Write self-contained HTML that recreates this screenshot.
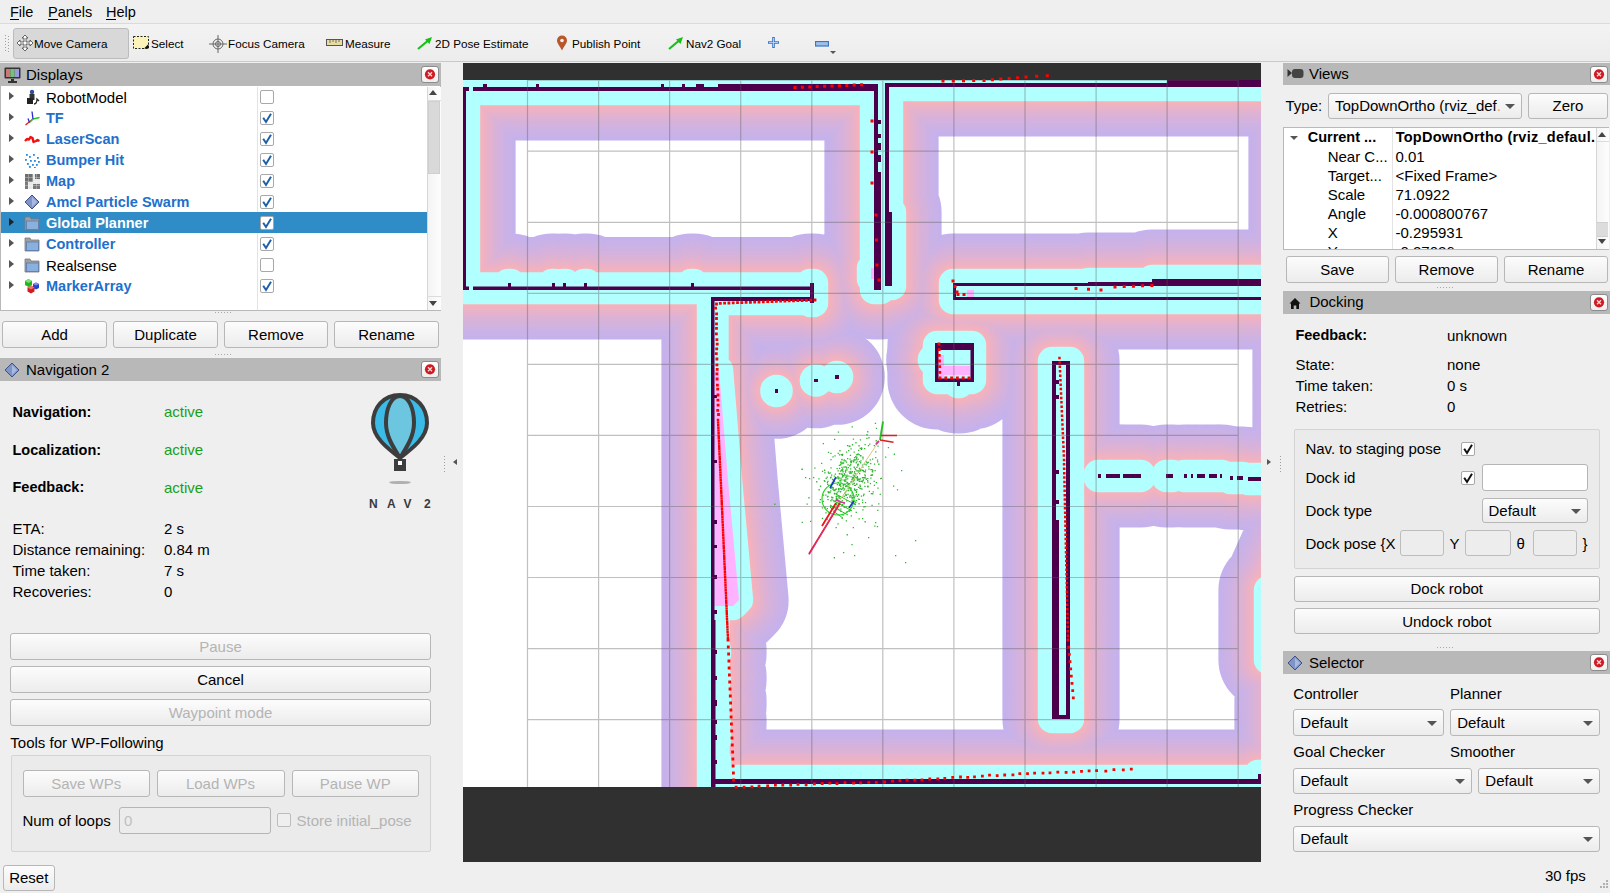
<!DOCTYPE html>
<html><head><meta charset="utf-8"><style>
html,body{margin:0;padding:0;width:1610px;height:893px;overflow:hidden;background:#efefef;}
body{position:relative;font-family:"Liberation Sans",sans-serif;}
div{position:absolute;white-space:nowrap;}
</style></head><body>
<div style="left:0px;top:0px;width:1610px;height:23px;background:#efefef;"></div>
<div style="left:0px;top:23px;width:1610px;height:1px;background:#dadada;"></div>
<div style="left:10px;top:4.73px;font-size:14.5px;line-height:14.5px;font-weight:400;color:#000;">File</div>
<div style="left:10px;top:19px;width:9px;height:1px;background:#000;"></div>
<div style="left:48px;top:4.73px;font-size:14.5px;line-height:14.5px;font-weight:400;color:#000;">Panels</div>
<div style="left:48px;top:19px;width:10px;height:1px;background:#000;"></div>
<div style="left:106px;top:4.73px;font-size:14.5px;line-height:14.5px;font-weight:400;color:#000;">Help</div>
<div style="left:106px;top:19px;width:10px;height:1px;background:#000;"></div>
<div style="left:0px;top:24px;width:1610px;height:38px;background:linear-gradient(#f3f3f3,#ececec);"></div>
<div style="left:0px;top:61px;width:1610px;height:1px;background:#c9c9c9;"></div>
<div style="left:5px;top:35px;width:1px;height:1px;background:#a0a0a0;"></div>
<div style="left:5px;top:38px;width:1px;height:1px;background:#a0a0a0;"></div>
<div style="left:5px;top:41px;width:1px;height:1px;background:#a0a0a0;"></div>
<div style="left:5px;top:44px;width:1px;height:1px;background:#a0a0a0;"></div>
<div style="left:5px;top:47px;width:1px;height:1px;background:#a0a0a0;"></div>
<div style="left:5px;top:50px;width:1px;height:1px;background:#a0a0a0;"></div>
<div style="left:8px;top:36px;width:1px;height:1px;background:#a0a0a0;"></div>
<div style="left:8px;top:39px;width:1px;height:1px;background:#a0a0a0;"></div>
<div style="left:8px;top:42px;width:1px;height:1px;background:#a0a0a0;"></div>
<div style="left:8px;top:45px;width:1px;height:1px;background:#a0a0a0;"></div>
<div style="left:8px;top:48px;width:1px;height:1px;background:#a0a0a0;"></div>
<div style="left:8px;top:51px;width:1px;height:1px;background:#a0a0a0;"></div>
<div style="left:13px;top:28px;width:116px;height:31px;box-sizing:border-box;border:1px solid #bcbcbc;border-radius:3px;background:#d8d8d8;"></div>
<svg style="position:absolute;left:16px;top:34px;" width="18" height="18" viewBox="0 0 18 18"><g fill="#fff" stroke="#444" stroke-width="0.8"><path d="M9 1 L12 4 L10 4 L10 8 L14 8 L14 6 L17 9 L14 12 L14 10 L10 10 L10 14 L12 14 L9 17 L6 14 L8 14 L8 10 L4 10 L4 12 L1 9 L4 6 L4 8 L8 8 L8 4 L6 4 Z"/></g></svg>
<div style="left:34px;top:37.60px;font-size:11.7px;line-height:11.7px;font-weight:400;color:#000;">Move Camera</div>
<svg style="position:absolute;left:133px;top:36px;" width="16" height="13" viewBox="0 0 16 13"><rect x="0.5" y="0.5" width="15" height="12" fill="#fbf3b8" stroke="#222" stroke-dasharray="2 1.5"/><path d="M11 12.5 L15.5 12.5 L15.5 8 Z" fill="#111"/></svg>
<div style="left:151px;top:37.60px;font-size:11.7px;line-height:11.7px;font-weight:400;color:#000;">Select</div>
<svg style="position:absolute;left:209px;top:35px;" width="18" height="18" viewBox="0 0 18 18"><g fill="none" stroke="#666" stroke-width="1"><circle cx="9" cy="9" r="5"/><circle cx="9" cy="9" r="2.5"/><path d="M9 0 V18 M0 9 H18"/></g></svg>
<div style="left:228px;top:37.60px;font-size:11.7px;line-height:11.7px;font-weight:400;color:#000;">Focus Camera</div>
<svg style="position:absolute;left:326px;top:39px;" width="17" height="8" viewBox="0 0 17 8"><rect x="0.5" y="0.5" width="16" height="6" fill="#e8dca0" stroke="#555"/><path d="M4 1 V4 M7 1 V3 M10 1 V4 M13 1 V3" stroke="#555" stroke-width="0.8"/></svg>
<div style="left:345px;top:37.60px;font-size:11.7px;line-height:11.7px;font-weight:400;color:#000;">Measure</div>
<svg style="position:absolute;left:417px;top:36px;" width="16" height="14" viewBox="0 0 16 14"><path d="M1 13 L13 3" stroke="#16c016" stroke-width="2.2"/><path d="M15 1 L8 3.5 L12.5 8 Z" fill="#16c016"/></svg>
<div style="left:435px;top:37.60px;font-size:11.7px;line-height:11.7px;font-weight:400;color:#000;">2D Pose Estimate</div>
<svg style="position:absolute;left:556px;top:35px;" width="12" height="16" viewBox="0 0 12 16"><path d="M6 15.5 C4 11 1 8.5 1 5.5 A5 5 0 0 1 11 5.5 C11 8.5 8 11 6 15.5 Z" fill="#b8572a"/><circle cx="6" cy="5.5" r="1.8" fill="#f0f0f0"/></svg>
<div style="left:572px;top:37.60px;font-size:11.7px;line-height:11.7px;font-weight:400;color:#000;">Publish Point</div>
<svg style="position:absolute;left:668px;top:36px;" width="16" height="14" viewBox="0 0 16 14"><path d="M1 13 L13 3" stroke="#16c016" stroke-width="2.2"/><path d="M15 1 L8 3.5 L12.5 8 Z" fill="#16c016"/></svg>
<div style="left:686px;top:37.60px;font-size:11.7px;line-height:11.7px;font-weight:400;color:#000;">Nav2 Goal</div>
<svg style="position:absolute;left:767px;top:36px;" width="13" height="13" viewBox="0 0 13 13"><path d="M6.5 1 V12 M1 6.5 H12" stroke="#3a76c4" stroke-width="2.6"/><path d="M6.5 2 V11 M2 6.5 H11" stroke="#cfe0f5" stroke-width="0.8"/></svg>
<svg style="position:absolute;left:815px;top:41px;" width="14" height="6" viewBox="0 0 14 6"><rect x="0.5" y="0.5" width="13" height="4.5" fill="#9cc0ea" stroke="#3a76c4" stroke-width="1.2"/></svg>
<div style="left:830px;top:51px;width:0;height:0;border-left:3px solid transparent;border-right:3px solid transparent;border-top:3px solid #555;"></div>
<div style="left:0px;top:62px;width:1610px;height:831px;background:#efefef;"></div>
<div style="left:0px;top:63px;width:441px;height:23px;background:#b8b8b8;"></div>
<svg style="position:absolute;left:4px;top:67px;" width="17" height="17" viewBox="0 0 17 17"><rect x="0.5" y="0.5" width="16" height="11" rx="1" fill="#333"/><rect x="2" y="2" width="4.3" height="8" fill="#c87878"/><rect x="6.3" y="2" width="4.4" height="8" fill="#78c078"/><rect x="10.7" y="2" width="4.3" height="8" fill="#9a9ae0"/><rect x="7" y="12" width="3" height="2" fill="#333"/><rect x="4" y="14" width="9" height="2" fill="#333"/></svg>
<div style="left:26px;top:66.80px;font-size:15px;line-height:15px;font-weight:400;color:#000;">Displays</div>
<div style="left:421px;top:66px;width:18px;height:17px;box-sizing:border-box;border:1px solid #8c8c8c;border-radius:3px;background:linear-gradient(#ffffff,#eeeeee);"></div>
<svg style="position:absolute;left:421px;top:66px" width="18" height="17"><circle cx="9" cy="8.3" r="5.1" fill="#d01a22"/><path d="M7 6.3 L11 10.3 M11 6.3 L7 10.3" stroke="#f4dede" stroke-width="1.3"/></svg>
<div style="left:0px;top:86px;width:441px;height:225px;box-sizing:border-box;border:1px solid #b9b9b9;border-top:none;background:#fff;"></div>
<div style="left:257px;top:87px;width:1px;height:223px;background:#e3e3e3;"></div>
<div style="left:427px;top:87px;width:13px;height:223px;background:linear-gradient(90deg,#f4f4f4,#fdfdfd);border-left:1px solid #d6d6d6;"></div>
<div style="left:428px;top:101px;width:12px;height:73px;box-sizing:border-box;background:#d9d9d9;border:1px solid #cfcfcf;"></div>
<div style="left:427px;top:100px;width:14px;height:1px;background:#dcdcdc;"></div>
<div style="left:427px;top:296px;width:14px;height:1px;background:#dcdcdc;"></div>
<div style="left:429px;top:90px;width:0;height:0;border-left:4.5px solid transparent;border-right:4.5px solid transparent;border-bottom:5px solid #444;"></div>
<div style="left:429px;top:301px;width:0;height:0;border-left:4.5px solid transparent;border-right:4.5px solid transparent;border-top:5px solid #444;"></div>
<div style="left:9px;top:92px;width:0;height:0;border-top:4.5px solid transparent;border-bottom:4.5px solid transparent;border-left:5px solid #555;"></div>
<svg style="position:absolute;left:24px;top:89px;" width="16" height="16" viewBox="0 0 16 16"><circle cx="8" cy="3" r="2.2" fill="#2a4fa0"/><rect x="5.5" y="5" width="5" height="6" fill="#333"/><rect x="3" y="9" width="6" height="6" fill="#222"/><path d="M10 15 Q13 15 13 10 L15 12" stroke="#222" fill="none" stroke-width="1.3"/></svg>
<div style="left:46px;top:89.90px;font-size:15px;line-height:15px;font-weight:400;color:#000;">RobotModel</div>
<div style="left:260px;top:90px;width:14px;height:14px;box-sizing:border-box;border:1px solid #a8a8a8;border-radius:2px;background:#fff;"></div>
<div style="left:9px;top:113px;width:0;height:0;border-top:4.5px solid transparent;border-bottom:4.5px solid transparent;border-left:5px solid #555;"></div>
<svg style="position:absolute;left:24px;top:110px;" width="16" height="16" viewBox="0 0 16 16"><path d="M9 9 L1.5 15" stroke="#e81c1c" stroke-width="1.4"/><path d="M9 9 L15.5 7.5 M9 9 L5.5 12.5" stroke="#22c822" stroke-width="1.4"/><path d="M9 9 L8 1.5 M5.5 12.5 L4 8.5" stroke="#2a2ad8" stroke-width="1.3"/></svg>
<div style="left:46px;top:111.33px;font-size:14.5px;line-height:14.5px;font-weight:700;color:#2170cc;">TF</div>
<div style="left:260px;top:111px;width:14px;height:14px;box-sizing:border-box;border:1px solid #a8a8a8;border-radius:2px;background:#fff;"></div>
<svg style="position:absolute;left:260px;top:111px" width="14" height="14" viewBox="0 0 14 14"><path d="M3.2 6.8 L6 11 L11 2.8" fill="none" stroke="#1f5fa8" stroke-width="2"/></svg>
<div style="left:9px;top:134px;width:0;height:0;border-top:4.5px solid transparent;border-bottom:4.5px solid transparent;border-left:5px solid #555;"></div>
<svg style="position:absolute;left:24px;top:131px;" width="16" height="16" viewBox="0 0 16 16"><path d="M1 10 L3 8 L5 8.5 L6.5 6 L8.5 7 L9.5 11 L12 10 L13.5 9 L15.5 10" stroke="#f01010" stroke-width="2.4" fill="none" stroke-linejoin="round"/></svg>
<div style="left:46px;top:132.33px;font-size:14.5px;line-height:14.5px;font-weight:700;color:#2170cc;">LaserScan</div>
<div style="left:260px;top:132px;width:14px;height:14px;box-sizing:border-box;border:1px solid #a8a8a8;border-radius:2px;background:#fff;"></div>
<svg style="position:absolute;left:260px;top:132px" width="14" height="14" viewBox="0 0 14 14"><path d="M3.2 6.8 L6 11 L11 2.8" fill="none" stroke="#1f5fa8" stroke-width="2"/></svg>
<div style="left:9px;top:155px;width:0;height:0;border-top:4.5px solid transparent;border-bottom:4.5px solid transparent;border-left:5px solid #555;"></div>
<svg style="position:absolute;left:24px;top:152px;" width="16" height="16" viewBox="0 0 16 16"><rect x="2" y="2" width="1.8" height="1.8" fill="#2a8ae0"/><rect x="5" y="4" width="1.8" height="1.8" fill="#2a8ae0"/><rect x="9" y="2" width="1.8" height="1.8" fill="#2a8ae0"/><rect x="13" y="5" width="1.8" height="1.8" fill="#2a8ae0"/><rect x="1" y="7" width="1.8" height="1.8" fill="#2a8ae0"/><rect x="6" y="8" width="1.8" height="1.8" fill="#2a8ae0"/><rect x="10" y="8" width="1.8" height="1.8" fill="#2a8ae0"/><rect x="14" y="9" width="1.8" height="1.8" fill="#2a8ae0"/><rect x="3" y="11" width="1.8" height="1.8" fill="#2a8ae0"/><rect x="8" y="12" width="1.8" height="1.8" fill="#2a8ae0"/><rect x="12" y="12" width="1.8" height="1.8" fill="#2a8ae0"/><rect x="5" y="14" width="1.8" height="1.8" fill="#2a8ae0"/><rect x="10" y="15" width="1.8" height="1.8" fill="#2a8ae0"/></svg>
<div style="left:46px;top:153.33px;font-size:14.5px;line-height:14.5px;font-weight:700;color:#2170cc;">Bumper Hit</div>
<div style="left:260px;top:153px;width:14px;height:14px;box-sizing:border-box;border:1px solid #a8a8a8;border-radius:2px;background:#fff;"></div>
<svg style="position:absolute;left:260px;top:153px" width="14" height="14" viewBox="0 0 14 14"><path d="M3.2 6.8 L6 11 L11 2.8" fill="none" stroke="#1f5fa8" stroke-width="2"/></svg>
<div style="left:9px;top:176px;width:0;height:0;border-top:4.5px solid transparent;border-bottom:4.5px solid transparent;border-left:5px solid #555;"></div>
<svg style="position:absolute;left:24px;top:173px;" width="16" height="16" viewBox="0 0 16 16"><rect x="1" y="1" width="15" height="15" fill="#e8e8e8"/><rect x="1" y="1" width="8" height="8" fill="#6e6e6e"/><rect x="11" y="1" width="5" height="5" fill="#6e6e6e"/><rect x="1" y="9" width="3" height="7" fill="#7a7a7a"/><rect x="9" y="11" width="7" height="5" fill="#777"/><path d="M1 4.5H16M1 8.5H16M1 12.5H16M4.5 1V16M8.5 1V16M12.5 1V16" stroke="#fff" stroke-width="0.5" opacity="0.6"/></svg>
<div style="left:46px;top:174.33px;font-size:14.5px;line-height:14.5px;font-weight:700;color:#2170cc;">Map</div>
<div style="left:260px;top:174px;width:14px;height:14px;box-sizing:border-box;border:1px solid #a8a8a8;border-radius:2px;background:#fff;"></div>
<svg style="position:absolute;left:260px;top:174px" width="14" height="14" viewBox="0 0 14 14"><path d="M3.2 6.8 L6 11 L11 2.8" fill="none" stroke="#1f5fa8" stroke-width="2"/></svg>
<div style="left:9px;top:197px;width:0;height:0;border-top:4.5px solid transparent;border-bottom:4.5px solid transparent;border-left:5px solid #555;"></div>
<svg style="position:absolute;left:24px;top:194px;" width="16" height="16" viewBox="0 0 16 16"><path d="M8 1 L15 8 L8 15 L1 8 Z" fill="#7f95c8" stroke="#3f4f88" stroke-width="1"/><path d="M8 3 L13 8 L8 13 Z" fill="#a8b8e0"/></svg>
<div style="left:46px;top:195.33px;font-size:14.5px;line-height:14.5px;font-weight:700;color:#2170cc;">Amcl Particle Swarm</div>
<div style="left:260px;top:195px;width:14px;height:14px;box-sizing:border-box;border:1px solid #a8a8a8;border-radius:2px;background:#fff;"></div>
<svg style="position:absolute;left:260px;top:195px" width="14" height="14" viewBox="0 0 14 14"><path d="M3.2 6.8 L6 11 L11 2.8" fill="none" stroke="#1f5fa8" stroke-width="2"/></svg>
<div style="left:1px;top:212px;width:426px;height:21px;background:#308cc6;"></div>
<div style="left:9px;top:218px;width:0;height:0;border-top:4.5px solid transparent;border-bottom:4.5px solid transparent;border-left:5px solid #222;"></div>
<svg style="position:absolute;left:24px;top:215px;" width="16" height="16" viewBox="0 0 16 16"><path d="M1 2 L6 2 L7 4 L15 4 L15 15 L1 15 Z" fill="#a0a0a0" stroke="#7a7a7a" stroke-width="0.8"/><rect x="2.5" y="6" width="12" height="8.5" fill="#8ab0e0" stroke="#5a7aaa" stroke-width="0.8"/></svg>
<div style="left:46px;top:216.33px;font-size:14.5px;line-height:14.5px;font-weight:700;color:#fff;">Global Planner</div>
<div style="left:260px;top:216px;width:14px;height:14px;box-sizing:border-box;border:1px solid #a8a8a8;border-radius:2px;background:#fff;"></div>
<svg style="position:absolute;left:260px;top:216px" width="14" height="14" viewBox="0 0 14 14"><path d="M3.2 6.8 L6 11 L11 2.8" fill="none" stroke="#1f5fa8" stroke-width="2"/></svg>
<div style="left:9px;top:239px;width:0;height:0;border-top:4.5px solid transparent;border-bottom:4.5px solid transparent;border-left:5px solid #555;"></div>
<svg style="position:absolute;left:24px;top:236px;" width="16" height="16" viewBox="0 0 16 16"><path d="M1 2 L6 2 L7 4 L15 4 L15 15 L1 15 Z" fill="#a0a0a0" stroke="#7a7a7a" stroke-width="0.8"/><rect x="2.5" y="6" width="12" height="8.5" fill="#8ab0e0" stroke="#5a7aaa" stroke-width="0.8"/></svg>
<div style="left:46px;top:237.33px;font-size:14.5px;line-height:14.5px;font-weight:700;color:#2170cc;">Controller</div>
<div style="left:260px;top:237px;width:14px;height:14px;box-sizing:border-box;border:1px solid #a8a8a8;border-radius:2px;background:#fff;"></div>
<svg style="position:absolute;left:260px;top:237px" width="14" height="14" viewBox="0 0 14 14"><path d="M3.2 6.8 L6 11 L11 2.8" fill="none" stroke="#1f5fa8" stroke-width="2"/></svg>
<div style="left:9px;top:260px;width:0;height:0;border-top:4.5px solid transparent;border-bottom:4.5px solid transparent;border-left:5px solid #555;"></div>
<svg style="position:absolute;left:24px;top:257px;" width="16" height="16" viewBox="0 0 16 16"><path d="M1 2 L6 2 L7 4 L15 4 L15 15 L1 15 Z" fill="#a0a0a0" stroke="#7a7a7a" stroke-width="0.8"/><rect x="2.5" y="6" width="12" height="8.5" fill="#8ab0e0" stroke="#5a7aaa" stroke-width="0.8"/></svg>
<div style="left:46px;top:257.90px;font-size:15px;line-height:15px;font-weight:400;color:#000;">Realsense</div>
<div style="left:260px;top:258px;width:14px;height:14px;box-sizing:border-box;border:1px solid #a8a8a8;border-radius:2px;background:#fff;"></div>
<div style="left:9px;top:281px;width:0;height:0;border-top:4.5px solid transparent;border-bottom:4.5px solid transparent;border-left:5px solid #555;"></div>
<svg style="position:absolute;left:24px;top:278px;" width="16" height="16" viewBox="0 0 16 16"><path d="M1 3 L4.5 1 L8 3 L8 7 L4.5 9 L1 7 Z" fill="#1fb81f"/><path d="M1 3 L4.5 5 L8 3 L4.5 1 Z" fill="#7de07d"/><path d="M9 6 L12 4.5 L15 6 L15 10 L12 11.5 L9 10 Z" fill="#2444d0"/><path d="M9 6 L12 7.5 L15 6 L12 4.5 Z" fill="#8090f0"/><path d="M3.5 9.5 L7 7.5 L10.5 9.5 L10.5 13.5 L7 15.5 L3.5 13.5 Z" fill="#d01c1c"/><path d="M3.5 9.5 L7 11.5 L10.5 9.5 L7 7.5 Z" fill="#f07070"/></svg>
<div style="left:46px;top:279.33px;font-size:14.5px;line-height:14.5px;font-weight:700;color:#2170cc;">MarkerArray</div>
<div style="left:260px;top:279px;width:14px;height:14px;box-sizing:border-box;border:1px solid #a8a8a8;border-radius:2px;background:#fff;"></div>
<svg style="position:absolute;left:260px;top:279px" width="14" height="14" viewBox="0 0 14 14"><path d="M3.2 6.8 L6 11 L11 2.8" fill="none" stroke="#1f5fa8" stroke-width="2"/></svg>
<div style="left:215px;top:312px;width:1px;height:1px;background:#a8a8a8;"></div>
<div style="left:218px;top:312px;width:1px;height:1px;background:#a8a8a8;"></div>
<div style="left:221px;top:312px;width:1px;height:1px;background:#a8a8a8;"></div>
<div style="left:224px;top:312px;width:1px;height:1px;background:#a8a8a8;"></div>
<div style="left:227px;top:312px;width:1px;height:1px;background:#a8a8a8;"></div>
<div style="left:230px;top:312px;width:1px;height:1px;background:#a8a8a8;"></div>
<div style="left:2px;top:321px;width:105px;height:27px;box-sizing:border-box;border:1px solid #b7b7b7;border-radius:3px;background:linear-gradient(#fcfcfc,#ececec);"></div>
<div style="left:2px;top:326.96px;font-size:15px;line-height:15px;font-weight:400;color:#000;width:105px;text-align:center;">Add</div>
<div style="left:113px;top:321px;width:105px;height:27px;box-sizing:border-box;border:1px solid #b7b7b7;border-radius:3px;background:linear-gradient(#fcfcfc,#ececec);"></div>
<div style="left:113px;top:326.96px;font-size:15px;line-height:15px;font-weight:400;color:#000;width:105px;text-align:center;">Duplicate</div>
<div style="left:224px;top:321px;width:104px;height:27px;box-sizing:border-box;border:1px solid #b7b7b7;border-radius:3px;background:linear-gradient(#fcfcfc,#ececec);"></div>
<div style="left:224px;top:326.96px;font-size:15px;line-height:15px;font-weight:400;color:#000;width:104px;text-align:center;">Remove</div>
<div style="left:334px;top:321px;width:105px;height:27px;box-sizing:border-box;border:1px solid #b7b7b7;border-radius:3px;background:linear-gradient(#fcfcfc,#ececec);"></div>
<div style="left:334px;top:326.96px;font-size:15px;line-height:15px;font-weight:400;color:#000;width:105px;text-align:center;">Rename</div>
<div style="left:215px;top:354px;width:1px;height:1px;background:#a8a8a8;"></div>
<div style="left:218px;top:354px;width:1px;height:1px;background:#a8a8a8;"></div>
<div style="left:221px;top:354px;width:1px;height:1px;background:#a8a8a8;"></div>
<div style="left:224px;top:354px;width:1px;height:1px;background:#a8a8a8;"></div>
<div style="left:227px;top:354px;width:1px;height:1px;background:#a8a8a8;"></div>
<div style="left:230px;top:354px;width:1px;height:1px;background:#a8a8a8;"></div>
<div style="left:0px;top:358px;width:441px;height:23px;background:#b8b8b8;"></div>
<svg style="position:absolute;left:4px;top:362px;" width="16" height="16" viewBox="0 0 16 16"><path d="M8 1 L15 8 L8 15 L1 8 Z" fill="#7f95c8" stroke="#3f4f88" stroke-width="1"/><path d="M8 3 L13 8 L8 13 Z" fill="#a8b8e0"/></svg>
<div style="left:26px;top:361.80px;font-size:15px;line-height:15px;font-weight:400;color:#000;">Navigation 2</div>
<div style="left:421px;top:361px;width:18px;height:17px;box-sizing:border-box;border:1px solid #8c8c8c;border-radius:3px;background:linear-gradient(#ffffff,#eeeeee);"></div>
<svg style="position:absolute;left:421px;top:361px" width="18" height="17"><circle cx="9" cy="8.3" r="5.1" fill="#d01a22"/><path d="M7 6.3 L11 10.3 M11 6.3 L7 10.3" stroke="#f4dede" stroke-width="1.3"/></svg>
<div style="left:12.5px;top:404.53px;font-size:14.5px;line-height:14.5px;font-weight:700;color:#000;">Navigation:</div>
<div style="left:164px;top:404.10px;font-size:15px;line-height:15px;font-weight:400;color:#19a019;">active</div>
<div style="left:12.5px;top:442.53px;font-size:14.5px;line-height:14.5px;font-weight:700;color:#000;">Localization:</div>
<div style="left:164px;top:442.10px;font-size:15px;line-height:15px;font-weight:400;color:#19a019;">active</div>
<div style="left:12.5px;top:480.23px;font-size:14.5px;line-height:14.5px;font-weight:700;color:#000;">Feedback:</div>
<div style="left:164px;top:479.80px;font-size:15px;line-height:15px;font-weight:400;color:#19a019;">active</div>
<div style="left:12.5px;top:521.10px;font-size:15px;line-height:15px;font-weight:400;color:#000;">ETA:</div>
<div style="left:164px;top:521.10px;font-size:15px;line-height:15px;font-weight:400;color:#000;">2 s</div>
<div style="left:12.5px;top:542.00px;font-size:15px;line-height:15px;font-weight:400;color:#000;">Distance remaining:</div>
<div style="left:164px;top:542.00px;font-size:15px;line-height:15px;font-weight:400;color:#000;">0.84 m</div>
<div style="left:12.5px;top:562.90px;font-size:15px;line-height:15px;font-weight:400;color:#000;">Time taken:</div>
<div style="left:164px;top:562.90px;font-size:15px;line-height:15px;font-weight:400;color:#000;">7 s</div>
<div style="left:12.5px;top:583.70px;font-size:15px;line-height:15px;font-weight:400;color:#000;">Recoveries:</div>
<div style="left:164px;top:583.70px;font-size:15px;line-height:15px;font-weight:400;color:#000;">0</div>
<svg style="position:absolute;left:370px;top:392px;" width="62" height="95" viewBox="0 0 62 95">
<path d="M30 3 C13 3 3 16 3 31 C3 45 17 56 30 66 C43 56 57 45 57 31 C57 16 47 3 30 3 Z" fill="#3bbbe8" stroke="#3d3d3d" stroke-width="4"/>
<path d="M30 4 C21 4 16 17 16 31 C16 45 24 56 30 66 C36 56 44 45 44 31 C44 17 39 4 30 4 Z" fill="#6cc6e0" stroke="#3d3d3d" stroke-width="4"/>
<path d="M24 67 H36 V79 H24 Z" fill="#3d3d3d"/><rect x="28" y="69" width="4" height="4" fill="#fff"/>
<ellipse cx="30" cy="90.5" rx="11" ry="1.6" fill="#b0b0b0"/>
</svg>
<div style="left:369px;top:497.64px;font-size:12px;line-height:12px;font-weight:700;color:#3a3a3a;">N</div>
<div style="left:387px;top:497.64px;font-size:12px;line-height:12px;font-weight:700;color:#3a3a3a;">A</div>
<div style="left:403.5px;top:497.64px;font-size:12px;line-height:12px;font-weight:700;color:#3a3a3a;">V</div>
<div style="left:424px;top:497.64px;font-size:12px;line-height:12px;font-weight:700;color:#3a3a3a;">2</div>
<div style="left:444px;top:456px;width:1px;height:1px;background:#a0a0a0;"></div>
<div style="left:444px;top:459px;width:1px;height:1px;background:#a0a0a0;"></div>
<div style="left:444px;top:462px;width:1px;height:1px;background:#a0a0a0;"></div>
<div style="left:444px;top:465px;width:1px;height:1px;background:#a0a0a0;"></div>
<div style="left:444px;top:468px;width:1px;height:1px;background:#a0a0a0;"></div>
<div style="left:444px;top:471px;width:1px;height:1px;background:#a0a0a0;"></div>
<div style="left:453px;top:459px;width:0;height:0;border-top:3.5px solid transparent;border-bottom:3.5px solid transparent;border-right:4px solid #555;"></div>
<div style="left:10px;top:633px;width:421px;height:27px;box-sizing:border-box;border:1px solid #b7b7b7;border-radius:3px;background:linear-gradient(#fcfcfc,#ececec);"></div>
<div style="left:10px;top:638.96px;font-size:15px;line-height:15px;font-weight:400;color:#b4b4b4;width:421px;text-align:center;">Pause</div>
<div style="left:10px;top:666px;width:421px;height:27px;box-sizing:border-box;border:1px solid #b7b7b7;border-radius:3px;background:linear-gradient(#fcfcfc,#ececec);"></div>
<div style="left:10px;top:671.96px;font-size:15px;line-height:15px;font-weight:400;color:#000;width:421px;text-align:center;">Cancel</div>
<div style="left:10px;top:699px;width:421px;height:27px;box-sizing:border-box;border:1px solid #b7b7b7;border-radius:3px;background:linear-gradient(#fcfcfc,#ececec);"></div>
<div style="left:10px;top:704.96px;font-size:15px;line-height:15px;font-weight:400;color:#b4b4b4;width:421px;text-align:center;">Waypoint mode</div>
<div style="left:10.3px;top:734.70px;font-size:15px;line-height:15px;font-weight:400;color:#000;">Tools for WP-Following</div>
<div style="left:11px;top:755px;width:420px;height:97px;box-sizing:border-box;border:1px solid #d4d4d4;border-radius:2px;background:#ebebeb;"></div>
<div style="left:22.5px;top:770px;width:127.5px;height:27px;box-sizing:border-box;border:1px solid #b7b7b7;border-radius:3px;background:linear-gradient(#fcfcfc,#ececec);"></div>
<div style="left:22.5px;top:775.96px;font-size:15px;line-height:15px;font-weight:400;color:#b4b4b4;width:127.5px;text-align:center;">Save WPs</div>
<div style="left:156.5px;top:770px;width:128.0px;height:27px;box-sizing:border-box;border:1px solid #b7b7b7;border-radius:3px;background:linear-gradient(#fcfcfc,#ececec);"></div>
<div style="left:156.5px;top:775.96px;font-size:15px;line-height:15px;font-weight:400;color:#b4b4b4;width:128.0px;text-align:center;">Load WPs</div>
<div style="left:291.5px;top:770px;width:127.5px;height:27px;box-sizing:border-box;border:1px solid #b7b7b7;border-radius:3px;background:linear-gradient(#fcfcfc,#ececec);"></div>
<div style="left:291.5px;top:775.96px;font-size:15px;line-height:15px;font-weight:400;color:#b4b4b4;width:127.5px;text-align:center;">Pause WP</div>
<div style="left:22.4px;top:812.60px;font-size:15px;line-height:15px;font-weight:400;color:#000;">Num of loops</div>
<div style="left:119px;top:807px;width:152px;height:27px;box-sizing:border-box;border:1px solid #b5b5b5;border-radius:3px;background:#ececec;"></div>
<div style="left:124px;top:812.60px;font-size:15px;line-height:15px;font-weight:400;color:#c0c0c0;">0</div>
<div style="left:277px;top:813px;width:14px;height:14px;box-sizing:border-box;border:1px solid #bdbdbd;border-radius:2px;background:#efefef;"></div>
<div style="left:296.5px;top:812.60px;font-size:15px;line-height:15px;font-weight:400;color:#b4b4b4;">Store initial_pose</div>
<div style="left:2.5px;top:865px;width:52.5px;height:26px;box-sizing:border-box;border:1px solid #b7b7b7;border-radius:3px;background:linear-gradient(#fcfcfc,#ececec);"></div>
<div style="left:2.5px;top:870.46px;font-size:15px;line-height:15px;font-weight:400;color:#000;width:52.5px;text-align:center;">Reset</div>
<div style="left:1283px;top:63px;width:327px;height:22px;background:#b8b8b8;"></div>
<svg style="position:absolute;left:1287px;top:67px;" width="17" height="14" viewBox="0 0 17 14"><path d="M0.5 2 L5 6 L0.5 10 Z" fill="#333"/><rect x="5" y="2" width="11.5" height="9" rx="3" fill="#444"/></svg>
<div style="left:1309px;top:66.30px;font-size:15px;line-height:15px;font-weight:400;color:#000;">Views</div>
<div style="left:1590px;top:66px;width:18px;height:17px;box-sizing:border-box;border:1px solid #8c8c8c;border-radius:3px;background:linear-gradient(#ffffff,#eeeeee);"></div>
<svg style="position:absolute;left:1590px;top:66px" width="18" height="17"><circle cx="9" cy="8.3" r="5.1" fill="#d01a22"/><path d="M7 6.3 L11 10.3 M11 6.3 L7 10.3" stroke="#f4dede" stroke-width="1.3"/></svg>
<div style="left:1285.5px;top:98.10px;font-size:15px;line-height:15px;font-weight:400;color:#000;">Type:</div>
<div style="left:1328px;top:92.5px;width:194px;height:26.5px;box-sizing:border-box;border:1px solid #b7b7b7;border-radius:3px;background:linear-gradient(#fcfcfc,#ececec);"></div>
<div style="left:1335px;top:98.10px;font-size:15px;line-height:15px;font-weight:400;color:#000;">TopDownOrtho (rviz_def<span style="color:#e0a060">.</span></div>
<div style="left:1505px;top:103.75px;width:0;height:0;border-left:5px solid transparent;border-right:5px solid transparent;border-top:5px solid #555;"></div>
<div style="left:1528px;top:92.5px;width:80px;height:26.5px;box-sizing:border-box;border:1px solid #b7b7b7;border-radius:3px;background:linear-gradient(#fcfcfc,#ececec);"></div>
<div style="left:1528px;top:98.10px;font-size:15px;line-height:15px;font-weight:400;color:#000;width:80px;text-align:center;">Zero</div>
<div style="left:1283px;top:127px;width:326px;height:123px;box-sizing:border-box;border:1px solid #b9b9b9;background:#fff;"></div>
<div style="left:1392px;top:128px;width:1px;height:121px;background:#e3e3e3;"></div>
<div style="left:1596px;top:128px;width:12px;height:121px;background:linear-gradient(90deg,#f4f4f4,#fdfdfd);border-left:1px solid #d6d6d6;"></div>
<div style="left:1597px;top:222px;width:11px;height:13px;background:#dcdcdc;border-top:1px solid #cfcfcf;border-bottom:1px solid #cfcfcf;"></div>
<div style="left:1596px;top:141px;width:13px;height:1px;background:#dcdcdc;"></div>
<div style="left:1598px;top:132px;width:0;height:0;border-left:4px solid transparent;border-right:4px solid transparent;border-bottom:5px solid #444;"></div>
<div style="left:1598px;top:239px;width:0;height:0;border-left:4px solid transparent;border-right:4px solid transparent;border-top:5px solid #444;"></div>
<div style="left:1290px;top:136px;width:0;height:0;border-left:4px solid transparent;border-right:4px solid transparent;border-top:4.5px solid #555;"></div>
<div style="left:1284px;top:128px;width:312px;height:121px;overflow:hidden;">
<div style="left:23.700000000000045px;top:2.03px;font-size:14.5px;line-height:14.5px;font-weight:700;white-space:nowrap;">Current ...</div>
<div style="left:111.7px;top:1.6px;font-size:14.5px;line-height:14.5px;font-weight:700;letter-spacing:0.25px;">TopDownOrtho (rviz_defaul.</div>
<div style="left:43.700000000000045px;top:20.80px;font-size:15px;line-height:15px;font-weight:400;white-space:nowrap;">Near C...</div>
<div style="left:111.5px;top:20.80px;font-size:15px;line-height:15px;font-weight:400;white-space:nowrap;">0.01</div>
<div style="left:43.700000000000045px;top:39.80px;font-size:15px;line-height:15px;font-weight:400;white-space:nowrap;">Target...</div>
<div style="left:111.5px;top:39.80px;font-size:15px;line-height:15px;font-weight:400;white-space:nowrap;">&lt;Fixed Frame&gt;</div>
<div style="left:43.700000000000045px;top:58.80px;font-size:15px;line-height:15px;font-weight:400;white-space:nowrap;">Scale</div>
<div style="left:111.5px;top:58.80px;font-size:15px;line-height:15px;font-weight:400;white-space:nowrap;">71.0922</div>
<div style="left:43.700000000000045px;top:77.80px;font-size:15px;line-height:15px;font-weight:400;white-space:nowrap;">Angle</div>
<div style="left:111.5px;top:77.80px;font-size:15px;line-height:15px;font-weight:400;white-space:nowrap;">-0.000800767</div>
<div style="left:43.700000000000045px;top:96.80px;font-size:15px;line-height:15px;font-weight:400;white-space:nowrap;">X</div>
<div style="left:111.5px;top:96.80px;font-size:15px;line-height:15px;font-weight:400;white-space:nowrap;">-0.295931</div>
<div style="left:43.700000000000045px;top:115.80px;font-size:15px;line-height:15px;font-weight:400;white-space:nowrap;">Y</div>
<div style="left:111.5px;top:115.80px;font-size:15px;line-height:15px;font-weight:400;white-space:nowrap;">-0.27026</div>
</div>
<div style="left:1285.5px;top:256px;width:103.5px;height:27px;box-sizing:border-box;border:1px solid #b7b7b7;border-radius:3px;background:linear-gradient(#fcfcfc,#ececec);"></div>
<div style="left:1285.5px;top:261.96px;font-size:15px;line-height:15px;font-weight:400;color:#000;width:103.5px;text-align:center;">Save</div>
<div style="left:1395px;top:256px;width:103px;height:27px;box-sizing:border-box;border:1px solid #b7b7b7;border-radius:3px;background:linear-gradient(#fcfcfc,#ececec);"></div>
<div style="left:1395px;top:261.96px;font-size:15px;line-height:15px;font-weight:400;color:#000;width:103px;text-align:center;">Remove</div>
<div style="left:1504px;top:256px;width:104px;height:27px;box-sizing:border-box;border:1px solid #b7b7b7;border-radius:3px;background:linear-gradient(#fcfcfc,#ececec);"></div>
<div style="left:1504px;top:261.96px;font-size:15px;line-height:15px;font-weight:400;color:#000;width:104px;text-align:center;">Rename</div>
<div style="left:1437px;top:287px;width:1px;height:1px;background:#a8a8a8;"></div>
<div style="left:1440px;top:287px;width:1px;height:1px;background:#a8a8a8;"></div>
<div style="left:1443px;top:287px;width:1px;height:1px;background:#a8a8a8;"></div>
<div style="left:1446px;top:287px;width:1px;height:1px;background:#a8a8a8;"></div>
<div style="left:1449px;top:287px;width:1px;height:1px;background:#a8a8a8;"></div>
<div style="left:1452px;top:287px;width:1px;height:1px;background:#a8a8a8;"></div>
<div style="left:1283px;top:291px;width:327px;height:23px;background:#b8b8b8;"></div>
<svg style="position:absolute;left:1289px;top:297px;" width="12" height="13" viewBox="0 0 12 13"><path d="M6 1 L11.5 6.5 L10 6.5 L10 12 L7.3 12 L7.3 8.5 L4.7 8.5 L4.7 12 L2 12 L2 6.5 L0.5 6.5 Z" fill="#111"/></svg>
<div style="left:1309.4px;top:294.30px;font-size:15px;line-height:15px;font-weight:400;color:#000;">Docking</div>
<div style="left:1590px;top:294px;width:18px;height:17px;box-sizing:border-box;border:1px solid #8c8c8c;border-radius:3px;background:linear-gradient(#ffffff,#eeeeee);"></div>
<svg style="position:absolute;left:1590px;top:294px" width="18" height="17"><circle cx="9" cy="8.3" r="5.1" fill="#d01a22"/><path d="M7 6.3 L11 10.3 M11 6.3 L7 10.3" stroke="#f4dede" stroke-width="1.3"/></svg>
<div style="left:1295.4px;top:328.33px;font-size:14.5px;line-height:14.5px;font-weight:700;color:#000;">Feedback:</div>
<div style="left:1447px;top:327.90px;font-size:15px;line-height:15px;font-weight:400;color:#000;">unknown</div>
<div style="left:1295.4px;top:357.00px;font-size:15px;line-height:15px;font-weight:400;color:#000;">State:</div>
<div style="left:1447px;top:357.00px;font-size:15px;line-height:15px;font-weight:400;color:#000;">none</div>
<div style="left:1295.4px;top:377.70px;font-size:15px;line-height:15px;font-weight:400;color:#000;">Time taken:</div>
<div style="left:1447px;top:377.70px;font-size:15px;line-height:15px;font-weight:400;color:#000;">0 s</div>
<div style="left:1295.4px;top:398.50px;font-size:15px;line-height:15px;font-weight:400;color:#000;">Retries:</div>
<div style="left:1447px;top:398.50px;font-size:15px;line-height:15px;font-weight:400;color:#000;">0</div>
<div style="left:1294px;top:428.5px;width:306px;height:140px;box-sizing:border-box;border:1px solid #d4d4d4;border-radius:2px;background:#ebebeb;"></div>
<div style="left:1305.4px;top:441.00px;font-size:15px;line-height:15px;font-weight:400;color:#000;">Nav. to staging pose</div>
<div style="left:1461px;top:441.5px;width:14px;height:14px;box-sizing:border-box;border:1px solid #a8a8a8;border-radius:2px;background:#fff;"></div>
<svg style="position:absolute;left:1461px;top:441.5px" width="14" height="14" viewBox="0 0 14 14"><path d="M3.2 6.8 L6 11 L11 2.8" fill="none" stroke="#111" stroke-width="2"/></svg>
<div style="left:1305.4px;top:470.10px;font-size:15px;line-height:15px;font-weight:400;color:#000;">Dock id</div>
<div style="left:1461px;top:470.5px;width:14px;height:14px;box-sizing:border-box;border:1px solid #a8a8a8;border-radius:2px;background:#fff;"></div>
<svg style="position:absolute;left:1461px;top:470.5px" width="14" height="14" viewBox="0 0 14 14"><path d="M3.2 6.8 L6 11 L11 2.8" fill="none" stroke="#111" stroke-width="2"/></svg>
<div style="left:1481.5px;top:464.3px;width:106px;height:26.5px;box-sizing:border-box;border:1px solid #b5b5b5;border-radius:3px;background:#fff;"></div>
<div style="left:1305.4px;top:502.90px;font-size:15px;line-height:15px;font-weight:400;color:#000;">Dock type</div>
<div style="left:1481.5px;top:497.6px;width:106.0px;height:25.899999999999977px;box-sizing:border-box;border:1px solid #b7b7b7;border-radius:3px;background:linear-gradient(#fcfcfc,#ececec);"></div>
<div style="left:1488.5px;top:502.90px;font-size:15px;line-height:15px;font-weight:400;color:#000;">Default</div>
<div style="left:1570.5px;top:508.55px;width:0;height:0;border-left:5px solid transparent;border-right:5px solid transparent;border-top:5px solid #555;"></div>
<div style="left:1305.4px;top:535.90px;font-size:15px;line-height:15px;font-weight:400;color:#000;">Dock pose {X</div>
<div style="left:1399.5px;top:530.3px;width:44.5px;height:26px;box-sizing:border-box;border:1px solid #bdbdbd;border-radius:3px;background:#ededed;"></div>
<div style="left:1449.5px;top:535.90px;font-size:15px;line-height:15px;font-weight:400;color:#000;">Y</div>
<div style="left:1465px;top:530.3px;width:46px;height:26px;box-sizing:border-box;border:1px solid #bdbdbd;border-radius:3px;background:#ededed;"></div>
<div style="left:1516.5px;top:535.90px;font-size:15px;line-height:15px;font-weight:400;color:#000;">θ</div>
<div style="left:1532.5px;top:530.3px;width:44.5px;height:26px;box-sizing:border-box;border:1px solid #bdbdbd;border-radius:3px;background:#ededed;"></div>
<div style="left:1582.5px;top:535.90px;font-size:15px;line-height:15px;font-weight:400;color:#000;">}</div>
<div style="left:1293.5px;top:575.7px;width:306.5px;height:26.299999999999955px;box-sizing:border-box;border:1px solid #b7b7b7;border-radius:3px;background:linear-gradient(#fcfcfc,#ececec);"></div>
<div style="left:1293.5px;top:581.31px;font-size:15px;line-height:15px;font-weight:400;color:#000;width:306.5px;text-align:center;">Dock robot</div>
<div style="left:1293.5px;top:608.4px;width:306.5px;height:26.100000000000023px;box-sizing:border-box;border:1px solid #b7b7b7;border-radius:3px;background:linear-gradient(#fcfcfc,#ececec);"></div>
<div style="left:1293.5px;top:613.91px;font-size:15px;line-height:15px;font-weight:400;color:#000;width:306.5px;text-align:center;">Undock robot</div>
<div style="left:1437px;top:647px;width:1px;height:1px;background:#a8a8a8;"></div>
<div style="left:1440px;top:647px;width:1px;height:1px;background:#a8a8a8;"></div>
<div style="left:1443px;top:647px;width:1px;height:1px;background:#a8a8a8;"></div>
<div style="left:1446px;top:647px;width:1px;height:1px;background:#a8a8a8;"></div>
<div style="left:1449px;top:647px;width:1px;height:1px;background:#a8a8a8;"></div>
<div style="left:1452px;top:647px;width:1px;height:1px;background:#a8a8a8;"></div>
<div style="left:1280px;top:456px;width:1px;height:1px;background:#a0a0a0;"></div>
<div style="left:1280px;top:459px;width:1px;height:1px;background:#a0a0a0;"></div>
<div style="left:1280px;top:462px;width:1px;height:1px;background:#a0a0a0;"></div>
<div style="left:1280px;top:465px;width:1px;height:1px;background:#a0a0a0;"></div>
<div style="left:1280px;top:468px;width:1px;height:1px;background:#a0a0a0;"></div>
<div style="left:1280px;top:471px;width:1px;height:1px;background:#a0a0a0;"></div>
<div style="left:1267px;top:459px;width:0;height:0;border-top:3.5px solid transparent;border-bottom:3.5px solid transparent;border-left:4px solid #555;"></div>
<div style="left:1283px;top:651px;width:327px;height:23px;background:#b8b8b8;"></div>
<svg style="position:absolute;left:1287px;top:655px;" width="16" height="16" viewBox="0 0 16 16"><path d="M8 1 L15 8 L8 15 L1 8 Z" fill="#7f95c8" stroke="#3f4f88" stroke-width="1"/><path d="M8 3 L13 8 L8 13 Z" fill="#a8b8e0"/></svg>
<div style="left:1309px;top:654.80px;font-size:15px;line-height:15px;font-weight:400;color:#000;">Selector</div>
<div style="left:1590px;top:654px;width:18px;height:17px;box-sizing:border-box;border:1px solid #8c8c8c;border-radius:3px;background:linear-gradient(#ffffff,#eeeeee);"></div>
<svg style="position:absolute;left:1590px;top:654px" width="18" height="17"><circle cx="9" cy="8.3" r="5.1" fill="#d01a22"/><path d="M7 6.3 L11 10.3 M11 6.3 L7 10.3" stroke="#f4dede" stroke-width="1.3"/></svg>
<div style="left:1293.3px;top:686.30px;font-size:15px;line-height:15px;font-weight:400;color:#000;">Controller</div>
<div style="left:1450px;top:686.30px;font-size:15px;line-height:15px;font-weight:400;color:#000;">Planner</div>
<div style="left:1293.3px;top:709.4px;width:150.70000000000005px;height:26.600000000000023px;box-sizing:border-box;border:1px solid #b7b7b7;border-radius:3px;background:linear-gradient(#fcfcfc,#ececec);"></div>
<div style="left:1300.3px;top:715.16px;font-size:15px;line-height:15px;font-weight:400;color:#000;">Default</div>
<div style="left:1427px;top:720.7px;width:0;height:0;border-left:5px solid transparent;border-right:5px solid transparent;border-top:5px solid #555;"></div>
<div style="left:1450.2px;top:709.4px;width:149.79999999999995px;height:26.600000000000023px;box-sizing:border-box;border:1px solid #b7b7b7;border-radius:3px;background:linear-gradient(#fcfcfc,#ececec);"></div>
<div style="left:1457.2px;top:715.16px;font-size:15px;line-height:15px;font-weight:400;color:#000;">Default</div>
<div style="left:1583px;top:720.7px;width:0;height:0;border-left:5px solid transparent;border-right:5px solid transparent;border-top:5px solid #555;"></div>
<div style="left:1293.3px;top:744.00px;font-size:15px;line-height:15px;font-weight:400;color:#000;">Goal Checker</div>
<div style="left:1450px;top:744.00px;font-size:15px;line-height:15px;font-weight:400;color:#000;">Smoother</div>
<div style="left:1293.3px;top:767.5px;width:178.70000000000005px;height:26.5px;box-sizing:border-box;border:1px solid #b7b7b7;border-radius:3px;background:linear-gradient(#fcfcfc,#ececec);"></div>
<div style="left:1300.3px;top:773.21px;font-size:15px;line-height:15px;font-weight:400;color:#000;">Default</div>
<div style="left:1455px;top:778.75px;width:0;height:0;border-left:5px solid transparent;border-right:5px solid transparent;border-top:5px solid #555;"></div>
<div style="left:1478.3px;top:767.5px;width:121.70000000000005px;height:26.5px;box-sizing:border-box;border:1px solid #b7b7b7;border-radius:3px;background:linear-gradient(#fcfcfc,#ececec);"></div>
<div style="left:1485.3px;top:773.21px;font-size:15px;line-height:15px;font-weight:400;color:#000;">Default</div>
<div style="left:1583px;top:778.75px;width:0;height:0;border-left:5px solid transparent;border-right:5px solid transparent;border-top:5px solid #555;"></div>
<div style="left:1293.3px;top:802.10px;font-size:15px;line-height:15px;font-weight:400;color:#000;">Progress Checker</div>
<div style="left:1293.3px;top:825.5px;width:306.70000000000005px;height:26.5px;box-sizing:border-box;border:1px solid #b7b7b7;border-radius:3px;background:linear-gradient(#fcfcfc,#ececec);"></div>
<div style="left:1300.3px;top:831.21px;font-size:15px;line-height:15px;font-weight:400;color:#000;">Default</div>
<div style="left:1583px;top:836.75px;width:0;height:0;border-left:5px solid transparent;border-right:5px solid transparent;border-top:5px solid #555;"></div>
<div style="left:1545px;top:867.50px;font-size:15px;line-height:15px;font-weight:400;color:#000;">30 fps</div>
<div style="left:1606px;top:880px;width:1.5px;height:1.5px;background:#b0b0b0;"></div>
<div style="left:1603px;top:883px;width:1.5px;height:1.5px;background:#b0b0b0;"></div>
<div style="left:1606px;top:883px;width:1.5px;height:1.5px;background:#b0b0b0;"></div>
<div style="left:1600px;top:886px;width:1.5px;height:1.5px;background:#b0b0b0;"></div>
<div style="left:1603px;top:886px;width:1.5px;height:1.5px;background:#b0b0b0;"></div>
<div style="left:1606px;top:886px;width:1.5px;height:1.5px;background:#b0b0b0;"></div>
<svg style="position:absolute;left:463px;top:63px" width="798" height="799" viewBox="463 63 798 799">
<defs>
<path id="ob" d="M463 87H469V91H463ZM473 87H718V91H473ZM483 84H487V87H483ZM536 84H539V87H536ZM661 84H664V87H661ZM682 84H685V87H682ZM696 84H704V87H696ZM718 84H878V91H718ZM463 87H466V290H463ZM874 84H878V290H874ZM874 172H881V290H874ZM878 120H881V124H878ZM878 134H881V138H878ZM878 143H881V150H878ZM878 155H881V162H878ZM885 84H889V286H885ZM885 212H892V286H885ZM885 83H1261V87H885ZM1167 80H1261V87H1167ZM463 286.5H469V290H463ZM473 286.5H814V290H473ZM508 283H511V286.5H508ZM552 283H555V286.5H552ZM563 283H566V286.5H563ZM584 283H587V286.5H584ZM691 283H694V286.5H691ZM810 283H814V303H810ZM711 297H814V301H711ZM711 297H714.5V787H711ZM711 620H715.5V787H711ZM714.5 395H717V398H714.5ZM714.5 460H717V463H714.5ZM714.5 520H717V524H714.5ZM714.5 545H717V548H714.5ZM714.5 575H717V579H714.5ZM714.5 610H717V614H714.5ZM714.5 650H717V654H714.5ZM714.5 676H717V680H714.5ZM714.5 700H717V706H714.5ZM714.5 720H717V724H714.5ZM714.5 735H717V740H714.5ZM714.5 760H717V764H714.5ZM711 779H1261V784H711ZM953 283H1261V286H953ZM1088 282H1261V286H1088ZM1152 279H1261V286H1152ZM953 297H1261V300H953ZM953 283H956V300H953ZM1052 361H1056V719H1052ZM1052 520H1059V719H1052ZM1066 361H1070V719H1066ZM1052 361H1070V365H1052ZM1052 715H1070V719H1052ZM1056 380H1059V384H1056ZM1056 395H1059V399H1056ZM1056 470H1059V474H1056ZM1056 500H1059V504H1056ZM1056 560H1059V564H1056ZM1056 590H1059V596H1056ZM1056 640H1059V646H1056ZM1056 680H1059V684H1056ZM1098 474H1101V478H1098ZM1106 474H1120V478H1106ZM1123 474H1141V478H1123ZM1166 474H1173V478H1166ZM1184 474H1187V478H1184ZM1191 474H1193V478H1191ZM1197 474H1205V478H1197ZM1209 474H1217V478H1209ZM1220 474H1222V478H1220ZM1230 476H1233V480H1230ZM1237 476H1243V480H1237ZM1248 477H1261V481H1248ZM1258 774H1261V784H1258ZM1298 60H1302V300H1298ZM1302 300H1306V520H1302ZM1268 590H1272V660H1268ZM1284 660H1288V770H1284ZM937 345H972V350H937ZM937 345H938.5V380H937ZM970.5 345H972V380H970.5ZM937 378.5H972V380H937ZM957.5 380H959.5V384H957.5ZM714.5 370L719 370L728 480L739 600L733 606L714.5 606ZM938.5 355L944 355L944 378.5L938.5 378.5ZM944 366L970.5 366L970.5 375L944 375ZM967 290L974 290L974 297L967 297ZM871 268L874 268L874 279L871 279ZM1300 525L1270 592L1273 592L1303 525Z"/>
<path id="ob2" d="M776.2 390.7h0.6v0.6h-0.6ZM815.7 380.2h0.6v0.6h-0.6ZM836.7 376.7h0.6v0.6h-0.6ZM933.7 359.7h0.6v0.6h-0.6Z"/>
<clipPath id="cm"><rect x="463" y="80" width="798" height="707"/></clipPath>
</defs>
<rect x="463" y="63" width="798" height="799" fill="#303030"/>
<g clip-path="url(#cm)">
<rect x="463" y="80" width="798" height="707" fill="#fff"/>
<g stroke-linejoin="round" stroke-linecap="round">
<use href="#ob" xlink:href="#ob" fill="#c4b2ed" stroke="#c4b2ed" stroke-width="99.20"/>
<use href="#ob2" xlink:href="#ob2" fill="#c4b2ed" stroke="#c4b2ed" stroke-width="95.00"/>
<use href="#ob" xlink:href="#ob" fill="#c5b2ec" stroke="#c5b2ec" stroke-width="97.43"/>
<use href="#ob2" xlink:href="#ob2" fill="#c5b2ec" stroke="#c5b2ec" stroke-width="93.42"/>
<use href="#ob" xlink:href="#ob" fill="#c5b2ec" stroke="#c5b2ec" stroke-width="95.66"/>
<use href="#ob2" xlink:href="#ob2" fill="#c5b2ec" stroke="#c5b2ec" stroke-width="91.85"/>
<use href="#ob" xlink:href="#ob" fill="#c6b2eb" stroke="#c6b2eb" stroke-width="93.89"/>
<use href="#ob2" xlink:href="#ob2" fill="#c6b2eb" stroke="#c6b2eb" stroke-width="90.28"/>
<use href="#ob" xlink:href="#ob" fill="#c7b2ea" stroke="#c7b2ea" stroke-width="92.12"/>
<use href="#ob2" xlink:href="#ob2" fill="#c7b2ea" stroke="#c7b2ea" stroke-width="88.70"/>
<use href="#ob" xlink:href="#ob" fill="#c8b2e9" stroke="#c8b2e9" stroke-width="90.35"/>
<use href="#ob2" xlink:href="#ob2" fill="#c8b2e9" stroke="#c8b2e9" stroke-width="87.12"/>
<use href="#ob" xlink:href="#ob" fill="#c8b2e9" stroke="#c8b2e9" stroke-width="88.58"/>
<use href="#ob2" xlink:href="#ob2" fill="#c8b2e9" stroke="#c8b2e9" stroke-width="85.55"/>
<use href="#ob" xlink:href="#ob" fill="#c9b2e8" stroke="#c9b2e8" stroke-width="86.81"/>
<use href="#ob2" xlink:href="#ob2" fill="#c9b2e8" stroke="#c9b2e8" stroke-width="83.97"/>
<use href="#ob" xlink:href="#ob" fill="#cab2e7" stroke="#cab2e7" stroke-width="85.04"/>
<use href="#ob2" xlink:href="#ob2" fill="#cab2e7" stroke="#cab2e7" stroke-width="82.40"/>
<use href="#ob" xlink:href="#ob" fill="#cbb2e6" stroke="#cbb2e6" stroke-width="83.27"/>
<use href="#ob2" xlink:href="#ob2" fill="#cbb2e6" stroke="#cbb2e6" stroke-width="80.83"/>
<use href="#ob" xlink:href="#ob" fill="#ccb2e5" stroke="#ccb2e5" stroke-width="81.50"/>
<use href="#ob2" xlink:href="#ob2" fill="#ccb2e5" stroke="#ccb2e5" stroke-width="79.25"/>
<use href="#ob" xlink:href="#ob" fill="#cdb2e4" stroke="#cdb2e4" stroke-width="79.73"/>
<use href="#ob2" xlink:href="#ob2" fill="#cdb2e4" stroke="#cdb2e4" stroke-width="77.67"/>
<use href="#ob" xlink:href="#ob" fill="#cdb2e4" stroke="#cdb2e4" stroke-width="77.96"/>
<use href="#ob2" xlink:href="#ob2" fill="#cdb2e4" stroke="#cdb2e4" stroke-width="76.10"/>
<use href="#ob" xlink:href="#ob" fill="#ceb2e3" stroke="#ceb2e3" stroke-width="76.19"/>
<use href="#ob2" xlink:href="#ob2" fill="#ceb2e3" stroke="#ceb2e3" stroke-width="74.53"/>
<use href="#ob" xlink:href="#ob" fill="#cfb2e2" stroke="#cfb2e2" stroke-width="74.42"/>
<use href="#ob2" xlink:href="#ob2" fill="#cfb2e2" stroke="#cfb2e2" stroke-width="72.95"/>
<use href="#ob" xlink:href="#ob" fill="#d1b2e0" stroke="#d1b2e0" stroke-width="72.65"/>
<use href="#ob2" xlink:href="#ob2" fill="#d1b2e0" stroke="#d1b2e0" stroke-width="71.38"/>
<use href="#ob" xlink:href="#ob" fill="#d2b2df" stroke="#d2b2df" stroke-width="70.88"/>
<use href="#ob2" xlink:href="#ob2" fill="#d2b2df" stroke="#d2b2df" stroke-width="69.80"/>
<use href="#ob" xlink:href="#ob" fill="#d3b2de" stroke="#d3b2de" stroke-width="69.11"/>
<use href="#ob2" xlink:href="#ob2" fill="#d3b2de" stroke="#d3b2de" stroke-width="68.22"/>
<use href="#ob" xlink:href="#ob" fill="#d4b2dd" stroke="#d4b2dd" stroke-width="67.34"/>
<use href="#ob2" xlink:href="#ob2" fill="#d4b2dd" stroke="#d4b2dd" stroke-width="66.65"/>
<use href="#ob" xlink:href="#ob" fill="#d5b2dc" stroke="#d5b2dc" stroke-width="65.57"/>
<use href="#ob2" xlink:href="#ob2" fill="#d5b2dc" stroke="#d5b2dc" stroke-width="65.08"/>
<use href="#ob" xlink:href="#ob" fill="#d6b2db" stroke="#d6b2db" stroke-width="63.80"/>
<use href="#ob2" xlink:href="#ob2" fill="#d6b2db" stroke="#d6b2db" stroke-width="63.50"/>
<use href="#ob" xlink:href="#ob" fill="#d8b2d9" stroke="#d8b2d9" stroke-width="62.03"/>
<use href="#ob2" xlink:href="#ob2" fill="#d8b2d9" stroke="#d8b2d9" stroke-width="61.92"/>
<use href="#ob" xlink:href="#ob" fill="#d9b2d8" stroke="#d9b2d8" stroke-width="60.26"/>
<use href="#ob2" xlink:href="#ob2" fill="#d9b2d8" stroke="#d9b2d8" stroke-width="60.35"/>
<use href="#ob" xlink:href="#ob" fill="#dab2d7" stroke="#dab2d7" stroke-width="58.49"/>
<use href="#ob2" xlink:href="#ob2" fill="#dab2d7" stroke="#dab2d7" stroke-width="58.78"/>
<use href="#ob" xlink:href="#ob" fill="#dcb2d5" stroke="#dcb2d5" stroke-width="56.72"/>
<use href="#ob2" xlink:href="#ob2" fill="#dcb2d5" stroke="#dcb2d5" stroke-width="57.20"/>
<use href="#ob" xlink:href="#ob" fill="#ddb2d4" stroke="#ddb2d4" stroke-width="54.95"/>
<use href="#ob2" xlink:href="#ob2" fill="#ddb2d4" stroke="#ddb2d4" stroke-width="55.62"/>
<use href="#ob" xlink:href="#ob" fill="#dfb2d2" stroke="#dfb2d2" stroke-width="53.18"/>
<use href="#ob2" xlink:href="#ob2" fill="#dfb2d2" stroke="#dfb2d2" stroke-width="54.05"/>
<use href="#ob" xlink:href="#ob" fill="#e0b2d1" stroke="#e0b2d1" stroke-width="51.41"/>
<use href="#ob2" xlink:href="#ob2" fill="#e0b2d1" stroke="#e0b2d1" stroke-width="52.47"/>
<use href="#ob" xlink:href="#ob" fill="#e2b2cf" stroke="#e2b2cf" stroke-width="49.64"/>
<use href="#ob2" xlink:href="#ob2" fill="#e2b2cf" stroke="#e2b2cf" stroke-width="50.90"/>
<use href="#ob" xlink:href="#ob" fill="#e4b2cd" stroke="#e4b2cd" stroke-width="47.87"/>
<use href="#ob2" xlink:href="#ob2" fill="#e4b2cd" stroke="#e4b2cd" stroke-width="49.33"/>
<use href="#ob" xlink:href="#ob" fill="#e6b2cb" stroke="#e6b2cb" stroke-width="46.10"/>
<use href="#ob2" xlink:href="#ob2" fill="#e6b2cb" stroke="#e6b2cb" stroke-width="47.75"/>
<use href="#ob" xlink:href="#ob" fill="#e7b2ca" stroke="#e7b2ca" stroke-width="44.33"/>
<use href="#ob2" xlink:href="#ob2" fill="#e7b2ca" stroke="#e7b2ca" stroke-width="46.17"/>
<use href="#ob" xlink:href="#ob" fill="#e9b2c8" stroke="#e9b2c8" stroke-width="42.56"/>
<use href="#ob2" xlink:href="#ob2" fill="#e9b2c8" stroke="#e9b2c8" stroke-width="44.60"/>
<use href="#ob" xlink:href="#ob" fill="#ebb2c6" stroke="#ebb2c6" stroke-width="40.79"/>
<use href="#ob2" xlink:href="#ob2" fill="#ebb2c6" stroke="#ebb2c6" stroke-width="43.03"/>
<use href="#ob" xlink:href="#ob" fill="#edb2c4" stroke="#edb2c4" stroke-width="39.02"/>
<use href="#ob2" xlink:href="#ob2" fill="#edb2c4" stroke="#edb2c4" stroke-width="41.45"/>
<use href="#ob" xlink:href="#ob" fill="#efb2c2" stroke="#efb2c2" stroke-width="37.25"/>
<use href="#ob2" xlink:href="#ob2" fill="#efb2c2" stroke="#efb2c2" stroke-width="39.88"/>
<use href="#ob" xlink:href="#ob" fill="#f1b2c0" stroke="#f1b2c0" stroke-width="35.48"/>
<use href="#ob2" xlink:href="#ob2" fill="#f1b2c0" stroke="#f1b2c0" stroke-width="38.30"/>
<use href="#ob" xlink:href="#ob" fill="#f4b2bd" stroke="#f4b2bd" stroke-width="33.71"/>
<use href="#ob2" xlink:href="#ob2" fill="#f4b2bd" stroke="#f4b2bd" stroke-width="36.72"/>
<use href="#ob" xlink:href="#ob" fill="#f6b2bb" stroke="#f6b2bb" stroke-width="31.94"/>
<use href="#ob2" xlink:href="#ob2" fill="#f6b2bb" stroke="#f6b2bb" stroke-width="35.15"/>
<use href="#ob" xlink:href="#ob" fill="#f8b2b8" stroke="#f8b2b8" stroke-width="30.17"/>
<use href="#ob2" xlink:href="#ob2" fill="#f8b2b8" stroke="#f8b2b8" stroke-width="33.58"/>
<use href="#ob" xlink:href="#ob" fill="#b2ffff" stroke="#b2ffff" stroke-width="28.4"/>
<use href="#ob2" xlink:href="#ob2" fill="#b2ffff" stroke="#b2ffff" stroke-width="32.0"/>
</g>
<path d="M714.5 370L719 370L728 480L739 600L733 606L714.5 606ZM938.5 355L944 355L944 378.5L938.5 378.5ZM944 366L970.5 366L970.5 375L944 375ZM967 290L974 290L974 297L967 297ZM871 268L874 268L874 279L871 279Z" fill="#ffb2ff"/>
<path d="M463 87H469V91H463ZM473 87H718V91H473ZM483 84H487V87H483ZM536 84H539V87H536ZM661 84H664V87H661ZM682 84H685V87H682ZM696 84H704V87H696ZM718 84H878V91H718ZM463 87H466V290H463ZM874 84H878V290H874ZM874 172H881V290H874ZM878 120H881V124H878ZM878 134H881V138H878ZM878 143H881V150H878ZM878 155H881V162H878ZM885 84H889V286H885ZM885 212H892V286H885ZM885 83H1261V87H885ZM1167 80H1261V87H1167ZM463 286.5H469V290H463ZM473 286.5H814V290H473ZM508 283H511V286.5H508ZM552 283H555V286.5H552ZM563 283H566V286.5H563ZM584 283H587V286.5H584ZM691 283H694V286.5H691ZM810 283H814V303H810ZM711 297H814V301H711ZM711 297H714.5V787H711ZM711 620H715.5V787H711ZM714.5 395H717V398H714.5ZM714.5 460H717V463H714.5ZM714.5 520H717V524H714.5ZM714.5 545H717V548H714.5ZM714.5 575H717V579H714.5ZM714.5 610H717V614H714.5ZM714.5 650H717V654H714.5ZM714.5 676H717V680H714.5ZM714.5 700H717V706H714.5ZM714.5 720H717V724H714.5ZM714.5 735H717V740H714.5ZM714.5 760H717V764H714.5ZM711 779H1261V784H711ZM953 283H1261V286H953ZM1088 282H1261V286H1088ZM1152 279H1261V286H1152ZM953 297H1261V300H953ZM953 283H956V300H953ZM1052 361H1056V719H1052ZM1052 520H1059V719H1052ZM1066 361H1070V719H1066ZM1052 361H1070V365H1052ZM1052 715H1070V719H1052ZM1056 380H1059V384H1056ZM1056 395H1059V399H1056ZM1056 470H1059V474H1056ZM1056 500H1059V504H1056ZM1056 560H1059V564H1056ZM1056 590H1059V596H1056ZM1056 640H1059V646H1056ZM1056 680H1059V684H1056ZM1098 474H1101V478H1098ZM1106 474H1120V478H1106ZM1123 474H1141V478H1123ZM1166 474H1173V478H1166ZM1184 474H1187V478H1184ZM1191 474H1193V478H1191ZM1197 474H1205V478H1197ZM1209 474H1217V478H1209ZM1220 474H1222V478H1220ZM1230 476H1233V480H1230ZM1237 476H1243V480H1237ZM1248 477H1261V481H1248ZM1258 774H1261V784H1258ZM935 343H974V350H935ZM935 343H938.5V382H935ZM970.5 343H974V382H970.5ZM935 378.5H974V382H935ZM957 382H960V386H957ZM775 389H778V393H775ZM814 379H818V382H814ZM835 375H839V379H835Z" fill="#4c004c"/>
<path d="M527.5 80V790.5M527.5 80.2H1238.2M598.6 80V790.5M527.5 151.2H1238.2M669.6 80V790.5M527.5 222.3H1238.2M740.7 80V790.5M527.5 293.3H1238.2M811.8 80V790.5M527.5 364.4H1238.2M882.8 80V790.5M527.5 435.4H1238.2M953.9 80V790.5M527.5 506.5H1238.2M1025.0 80V790.5M527.5 577.5H1238.2M1096.1 80V790.5M527.5 648.6H1238.2M1167.1 80V790.5M527.5 719.6H1238.2M1238.2 80V790.5M527.5 790.7H1238.2" stroke="rgba(90,90,90,0.38)" stroke-width="1.2" fill="none"/>
</g>
<path d="M941.5 79.5h3v3h-3ZM951.8 79.4h3v3h-3ZM962.0 79.2h3v3h-3ZM972.2 79.1h3v3h-3ZM982.5 79.0h3v3h-3ZM990.9 78.3h3v3h-3ZM999.3 77.6h3v3h-3ZM1007.7 76.9h3v3h-3ZM1016.1 76.2h3v3h-3ZM1024.5 75.5h3v3h-3ZM1035.2 74.8h3v3h-3ZM1045.8 74.2h3v3h-3ZM793.5 86.0h3v3h-3ZM800.9 85.7h3v3h-3ZM808.3 85.4h3v3h-3ZM815.7 85.1h3v3h-3ZM823.1 84.8h3v3h-3ZM830.5 84.5h3v3h-3ZM837.9 84.2h3v3h-3ZM845.3 83.9h3v3h-3ZM852.7 83.6h3v3h-3ZM860.1 83.3h3v3h-3ZM870.5 119.5h3v3h-3ZM870.5 150.5h3v3h-3ZM870.5 181.5h3v3h-3ZM874.5 213.5h3v3h-3ZM875.0 238.5h3v3h-3ZM875.5 263.5h3v3h-3ZM877.5 278.5h3v3h-3ZM813.6 298.6h2.8v2.8h-2.8ZM809.3 298.8h2.8v2.8h-2.8ZM805.0 298.9h2.8v2.8h-2.8ZM800.7 299.1h2.8v2.8h-2.8ZM796.4 299.2h2.8v2.8h-2.8ZM792.1 299.4h2.8v2.8h-2.8ZM787.8 299.5h2.8v2.8h-2.8ZM783.5 299.7h2.8v2.8h-2.8ZM779.2 299.8h2.8v2.8h-2.8ZM774.9 300.0h2.8v2.8h-2.8ZM770.6 300.1h2.8v2.8h-2.8ZM766.3 300.3h2.8v2.8h-2.8ZM761.9 300.4h2.8v2.8h-2.8ZM757.6 300.6h2.8v2.8h-2.8ZM753.3 300.7h2.8v2.8h-2.8ZM749.0 300.9h2.8v2.8h-2.8ZM744.7 301.0h2.8v2.8h-2.8ZM740.4 301.2h2.8v2.8h-2.8ZM736.1 301.3h2.8v2.8h-2.8ZM731.8 301.5h2.8v2.8h-2.8ZM727.5 301.6h2.8v2.8h-2.8ZM723.2 301.8h2.8v2.8h-2.8ZM718.9 301.9h2.8v2.8h-2.8ZM715.1 302.6h2.8v2.8h-2.8ZM714.2 306.7h2.8v2.8h-2.8ZM715.2 312.5h2.8v2.8h-2.8ZM715.1 317.1h2.8v2.8h-2.8ZM715.1 322.5h2.8v2.8h-2.8ZM715.1 327.0h2.8v2.8h-2.8ZM715.0 332.4h2.8v2.8h-2.8ZM715.5 338.2h2.8v2.8h-2.8ZM715.8 342.7h2.8v2.8h-2.8ZM715.3 347.4h2.8v2.8h-2.8ZM714.9 352.2h2.8v2.8h-2.8ZM715.5 357.6h2.8v2.8h-2.8ZM715.5 363.4h2.8v2.8h-2.8ZM715.8 368.0h2.8v2.8h-2.8ZM715.5 372.4h2.8v2.8h-2.8ZM715.7 377.6h2.8v2.8h-2.8ZM716.0 383.7h2.8v2.8h-2.8ZM716.3 387.8h2.8v2.8h-2.8ZM716.6 393.6h2.8v2.8h-2.8ZM716.5 398.8h2.8v2.8h-2.8ZM716.7 403.8h2.8v2.8h-2.8ZM716.3 409.0h2.8v2.8h-2.8ZM717.1 413.1h2.8v2.8h-2.8ZM716.8 418.8h2.4v2.4h-2.4ZM716.9 421.4h2.4v2.4h-2.4ZM717.0 424.0h2.4v2.4h-2.4ZM717.2 426.7h2.4v2.4h-2.4ZM717.3 429.3h2.4v2.4h-2.4ZM717.4 431.9h2.4v2.4h-2.4ZM717.5 434.5h2.4v2.4h-2.4ZM717.6 437.1h2.4v2.4h-2.4ZM717.8 439.8h2.4v2.4h-2.4ZM717.9 442.4h2.4v2.4h-2.4ZM718.0 445.0h2.4v2.4h-2.4ZM718.1 447.6h2.4v2.4h-2.4ZM718.2 450.2h2.4v2.4h-2.4ZM718.3 452.8h2.4v2.4h-2.4ZM718.5 455.5h2.4v2.4h-2.4ZM718.6 458.1h2.4v2.4h-2.4ZM718.7 460.7h2.4v2.4h-2.4ZM718.8 463.3h2.4v2.4h-2.4ZM718.9 465.9h2.4v2.4h-2.4ZM719.1 468.6h2.4v2.4h-2.4ZM719.2 471.2h2.4v2.4h-2.4ZM719.3 473.8h2.4v2.4h-2.4ZM719.4 476.4h2.4v2.4h-2.4ZM719.5 479.0h2.4v2.4h-2.4ZM719.7 481.7h2.4v2.4h-2.4ZM719.8 484.3h2.4v2.4h-2.4ZM719.9 486.9h2.4v2.4h-2.4ZM720.0 489.5h2.4v2.4h-2.4ZM720.1 492.1h2.4v2.4h-2.4ZM720.3 494.8h2.4v2.4h-2.4ZM720.4 497.4h2.4v2.4h-2.4ZM720.5 500.0h2.4v2.4h-2.4ZM720.6 502.6h2.4v2.4h-2.4ZM720.7 505.2h2.4v2.4h-2.4ZM720.8 507.8h2.4v2.4h-2.4ZM721.0 510.5h2.4v2.4h-2.4ZM721.1 513.1h2.4v2.4h-2.4ZM721.2 515.7h2.4v2.4h-2.4ZM721.3 518.3h2.4v2.4h-2.4ZM721.4 520.9h2.4v2.4h-2.4ZM721.6 523.6h2.4v2.4h-2.4ZM721.7 526.2h2.4v2.4h-2.4ZM721.8 528.8h2.4v2.4h-2.4ZM721.9 531.4h2.4v2.4h-2.4ZM722.0 534.0h2.4v2.4h-2.4ZM722.2 536.7h2.4v2.4h-2.4ZM722.3 539.3h2.4v2.4h-2.4ZM722.4 541.9h2.4v2.4h-2.4ZM722.5 544.5h2.4v2.4h-2.4ZM722.6 547.1h2.4v2.4h-2.4ZM722.8 549.8h2.4v2.4h-2.4ZM722.9 552.4h2.4v2.4h-2.4ZM723.0 555.0h2.4v2.4h-2.4ZM723.1 557.6h2.4v2.4h-2.4ZM723.2 560.2h2.4v2.4h-2.4ZM723.3 562.8h2.4v2.4h-2.4ZM723.5 565.5h2.4v2.4h-2.4ZM723.6 568.1h2.4v2.4h-2.4ZM723.7 570.7h2.4v2.4h-2.4ZM723.8 573.3h2.4v2.4h-2.4ZM723.9 575.9h2.4v2.4h-2.4ZM724.1 578.6h2.4v2.4h-2.4ZM724.2 581.2h2.4v2.4h-2.4ZM724.3 583.8h2.4v2.4h-2.4ZM724.4 586.4h2.4v2.4h-2.4ZM724.5 589.0h2.4v2.4h-2.4ZM724.7 591.7h2.4v2.4h-2.4ZM724.8 594.3h2.4v2.4h-2.4ZM724.9 596.9h2.4v2.4h-2.4ZM725.0 599.5h2.4v2.4h-2.4ZM725.1 602.1h2.4v2.4h-2.4ZM725.3 604.8h2.4v2.4h-2.4ZM725.4 607.4h2.4v2.4h-2.4ZM725.5 610.0h2.4v2.4h-2.4ZM725.6 612.6h2.4v2.4h-2.4ZM725.7 615.2h2.4v2.4h-2.4ZM725.8 617.8h2.4v2.4h-2.4ZM726.0 620.5h2.4v2.4h-2.4ZM726.1 623.1h2.4v2.4h-2.4ZM726.2 625.7h2.4v2.4h-2.4ZM726.3 628.3h2.4v2.4h-2.4ZM726.4 630.9h2.4v2.4h-2.4ZM726.6 633.6h2.4v2.4h-2.4ZM726.7 636.2h2.4v2.4h-2.4ZM726.6 638.6h2.8v2.8h-2.8ZM726.9 645.6h2.8v2.8h-2.8ZM727.2 652.6h2.8v2.8h-2.8ZM727.5 659.6h2.8v2.8h-2.8ZM727.7 666.6h2.8v2.8h-2.8ZM728.0 673.6h2.8v2.8h-2.8ZM728.3 680.6h2.8v2.8h-2.8ZM728.6 687.6h2.8v2.8h-2.8ZM728.9 694.6h2.8v2.8h-2.8ZM729.2 701.6h2.8v2.8h-2.8ZM729.5 708.6h2.8v2.8h-2.8ZM729.7 715.6h2.8v2.8h-2.8ZM730.0 722.6h2.8v2.8h-2.8ZM730.3 729.6h2.8v2.8h-2.8ZM730.6 736.6h2.8v2.8h-2.8ZM730.9 743.6h2.8v2.8h-2.8ZM731.2 750.6h2.8v2.8h-2.8ZM731.5 757.6h2.8v2.8h-2.8ZM731.7 764.6h2.8v2.8h-2.8ZM732.0 771.6h2.8v2.8h-2.8ZM732.3 778.6h2.8v2.8h-2.8ZM734.7 785.8h2.8v2.8h-2.8ZM742.7 785.8h2.8v2.8h-2.8ZM750.5 785.5h2.8v2.8h-2.8ZM757.6 784.7h2.8v2.8h-2.8ZM766.3 784.6h2.8v2.8h-2.8ZM774.0 783.8h2.8v2.8h-2.8ZM781.4 783.6h2.8v2.8h-2.8ZM789.3 783.7h2.8v2.8h-2.8ZM796.6 783.0h2.8v2.8h-2.8ZM804.7 783.4h2.8v2.8h-2.8ZM813.0 782.4h2.8v2.8h-2.8ZM820.8 782.1h2.8v2.8h-2.8ZM828.4 781.8h2.8v2.8h-2.8ZM835.6 782.3h2.8v2.8h-2.8ZM843.6 781.3h2.8v2.8h-2.8ZM852.2 781.7h2.8v2.8h-2.8ZM859.3 781.5h2.8v2.8h-2.8ZM867.4 780.9h2.8v2.8h-2.8ZM874.9 780.9h2.8v2.8h-2.8ZM883.2 780.6h2.8v2.8h-2.8ZM891.2 779.7h2.8v2.8h-2.8ZM898.5 779.3h2.8v2.8h-2.8ZM905.7 778.7h2.8v2.8h-2.8ZM913.4 778.8h2.8v2.8h-2.8ZM920.6 778.4h2.8v2.8h-2.8ZM928.4 777.6h2.8v2.8h-2.8ZM936.4 777.4h2.8v2.8h-2.8ZM943.4 776.9h2.8v2.8h-2.8ZM951.3 776.0h2.8v2.8h-2.8ZM959.1 775.6h2.8v2.8h-2.8ZM966.3 775.9h2.8v2.8h-2.8ZM973.1 775.4h2.8v2.8h-2.8ZM981.0 774.8h2.8v2.8h-2.8ZM988.1 773.8h2.8v2.8h-2.8ZM995.8 774.3h2.8v2.8h-2.8ZM1003.3 773.6h2.8v2.8h-2.8ZM1011.5 773.4h2.8v2.8h-2.8ZM1018.4 772.3h2.8v2.8h-2.8ZM1026.1 772.3h2.8v2.8h-2.8ZM1033.2 771.8h2.8v2.8h-2.8ZM1041.6 771.7h2.8v2.8h-2.8ZM1048.6 771.5h2.8v2.8h-2.8ZM1056.4 770.7h2.8v2.8h-2.8ZM1064.7 771.0h2.8v2.8h-2.8ZM1072.2 770.8h2.8v2.8h-2.8ZM1080.1 769.9h2.8v2.8h-2.8ZM1087.7 769.5h2.8v2.8h-2.8ZM1095.2 769.2h2.8v2.8h-2.8ZM1104.4 769.7h2.8v2.8h-2.8ZM1112.5 768.3h2.8v2.8h-2.8ZM1121.9 768.4h2.8v2.8h-2.8ZM1129.9 767.7h2.8v2.8h-2.8ZM937.6 342.6h2.8v2.8h-2.8ZM937.8 348.3h2.8v2.8h-2.8ZM937.9 353.9h2.8v2.8h-2.8ZM938.1 359.6h2.8v2.8h-2.8ZM938.3 365.3h2.8v2.8h-2.8ZM938.4 370.9h2.8v2.8h-2.8ZM938.6 376.6h2.8v2.8h-2.8ZM944.4 376.6h2.8v2.8h-2.8ZM950.2 376.6h2.8v2.8h-2.8ZM956.0 376.6h2.8v2.8h-2.8ZM961.8 376.6h2.8v2.8h-2.8ZM967.6 376.6h2.8v2.8h-2.8ZM1058.2 356.8h2.5v2.5h-2.5ZM1058.4 361.2h2.5v2.5h-2.5ZM1058.6 365.6h2.5v2.5h-2.5ZM1058.8 370.1h2.5v2.5h-2.5ZM1059.0 374.5h2.5v2.5h-2.5ZM1059.2 378.9h2.5v2.5h-2.5ZM1059.4 383.4h2.5v2.5h-2.5ZM1059.6 387.8h2.5v2.5h-2.5ZM1059.8 392.2h2.5v2.5h-2.5ZM1060.0 396.7h2.5v2.5h-2.5ZM1060.2 401.1h2.5v2.5h-2.5ZM1060.4 405.5h2.5v2.5h-2.5ZM1060.6 410.0h2.5v2.5h-2.5ZM1060.8 414.4h2.5v2.5h-2.5ZM1061.0 418.8h2.5v2.5h-2.5ZM1061.2 423.3h2.5v2.5h-2.5ZM1061.4 427.7h2.5v2.5h-2.5ZM1061.6 432.1h2.5v2.5h-2.5ZM1061.8 436.6h2.5v2.5h-2.5ZM1062.0 441.0h2.5v2.5h-2.5ZM1062.2 445.4h2.5v2.5h-2.5ZM1062.4 449.9h2.5v2.5h-2.5ZM1062.6 454.3h2.5v2.5h-2.5ZM1062.8 458.8h2.5v2.5h-2.5ZM1062.8 463.1h2.5v2.5h-2.5ZM1062.9 467.5h2.5v2.5h-2.5ZM1063.0 471.9h2.5v2.5h-2.5ZM1063.1 476.3h2.5v2.5h-2.5ZM1063.2 480.7h2.5v2.5h-2.5ZM1063.3 485.1h2.5v2.5h-2.5ZM1063.4 489.5h2.5v2.5h-2.5ZM1063.5 493.9h2.5v2.5h-2.5ZM1063.6 498.3h2.5v2.5h-2.5ZM1063.7 502.7h2.5v2.5h-2.5ZM1063.8 507.0h2.5v2.5h-2.5ZM1063.9 511.4h2.5v2.5h-2.5ZM1064.0 515.8h2.5v2.5h-2.5ZM1064.1 520.2h2.5v2.5h-2.5ZM1064.2 524.6h2.5v2.5h-2.5ZM1064.3 529.0h2.5v2.5h-2.5ZM1064.4 533.4h2.5v2.5h-2.5ZM1064.5 537.8h2.5v2.5h-2.5ZM1064.6 542.2h2.5v2.5h-2.5ZM1064.7 546.6h2.5v2.5h-2.5ZM1064.8 550.9h2.5v2.5h-2.5ZM1064.9 555.3h2.5v2.5h-2.5ZM1065.0 559.7h2.5v2.5h-2.5ZM1065.1 564.1h2.5v2.5h-2.5ZM1065.2 568.5h2.5v2.5h-2.5ZM1065.3 572.9h2.5v2.5h-2.5ZM1065.4 577.3h2.5v2.5h-2.5ZM1065.5 581.7h2.5v2.5h-2.5ZM1065.6 586.1h2.5v2.5h-2.5ZM1065.7 590.5h2.5v2.5h-2.5ZM1065.8 594.8h2.5v2.5h-2.5ZM1065.9 599.2h2.5v2.5h-2.5ZM1066.0 603.6h2.5v2.5h-2.5ZM1066.1 608.0h2.5v2.5h-2.5ZM1066.2 612.4h2.5v2.5h-2.5ZM1066.3 616.8h2.5v2.5h-2.5ZM1066.4 621.2h2.5v2.5h-2.5ZM1066.5 625.6h2.5v2.5h-2.5ZM1066.6 630.0h2.5v2.5h-2.5ZM1066.7 634.4h2.5v2.5h-2.5ZM1066.6 638.6h2.8v2.8h-2.8ZM1067.3 645.8h2.8v2.8h-2.8ZM1067.9 653.0h2.8v2.8h-2.8ZM1068.6 660.3h2.8v2.8h-2.8ZM1069.3 667.5h2.8v2.8h-2.8ZM1069.9 674.7h2.8v2.8h-2.8ZM1070.6 681.9h2.8v2.8h-2.8ZM1071.3 689.2h2.8v2.8h-2.8ZM1071.9 696.4h2.8v2.8h-2.8ZM951.5 279.5h3v3h-3ZM953.5 285.0h3v3h-3ZM955.5 290.5h3v3h-3ZM956.5 293.0h3v3h-3ZM962.5 293.0h3v3h-3ZM1074.5 287.0h3v3h-3ZM1087.0 287.8h3v3h-3ZM1099.5 288.5h3v3h-3ZM1113.5 285.5h3v3h-3ZM1122.7 285.1h3v3h-3ZM1131.9 284.7h3v3h-3ZM1141.1 284.3h3v3h-3ZM1150.3 283.9h3v3h-3Z" fill="#ff0000"/>
<path d="M843.4 503.1h1.3v1.3h-1.3ZM851.3 460.2h1.3v1.3h-1.3ZM837.7 502.6h1.3v1.3h-1.3ZM864.8 477.3h1.3v1.3h-1.3ZM825.2 494.5h1.3v1.3h-1.3ZM859.8 470.2h1.3v1.3h-1.3ZM872.0 458.4h1.3v1.3h-1.3ZM845.2 480.4h1.3v1.3h-1.3ZM866.4 434.1h1.3v1.3h-1.3ZM830.3 487.8h1.3v1.3h-1.3ZM851.3 479.1h1.3v1.3h-1.3ZM845.6 485.6h1.3v1.3h-1.3ZM858.7 478.8h1.3v1.3h-1.3ZM860.0 462.1h1.3v1.3h-1.3ZM842.4 514.5h1.3v1.3h-1.3ZM835.8 503.7h1.3v1.3h-1.3ZM837.3 505.5h1.3v1.3h-1.3ZM845.1 494.5h1.3v1.3h-1.3ZM874.8 422.7h1.3v1.3h-1.3ZM841.3 458.8h1.3v1.3h-1.3ZM853.9 488.3h1.3v1.3h-1.3ZM852.3 483.5h1.3v1.3h-1.3ZM838.8 473.1h1.3v1.3h-1.3ZM844.6 466.2h1.3v1.3h-1.3ZM858.4 445.1h1.3v1.3h-1.3ZM854.5 468.1h1.3v1.3h-1.3ZM850.0 460.5h1.3v1.3h-1.3ZM855.6 462.1h1.3v1.3h-1.3ZM865.9 461.3h1.3v1.3h-1.3ZM841.6 473.6h1.3v1.3h-1.3ZM860.2 469.1h1.3v1.3h-1.3ZM858.0 449.7h1.3v1.3h-1.3ZM859.0 473.0h1.3v1.3h-1.3ZM853.5 476.2h1.3v1.3h-1.3ZM843.9 473.8h1.3v1.3h-1.3ZM836.6 495.5h1.3v1.3h-1.3ZM870.2 477.4h1.3v1.3h-1.3ZM868.3 468.4h1.3v1.3h-1.3ZM862.8 470.1h1.3v1.3h-1.3ZM858.9 480.7h1.3v1.3h-1.3ZM859.6 447.7h1.3v1.3h-1.3ZM864.9 501.9h1.3v1.3h-1.3ZM861.6 480.7h1.3v1.3h-1.3ZM843.6 459.2h1.3v1.3h-1.3ZM887.8 446.9h1.3v1.3h-1.3ZM858.6 480.7h1.3v1.3h-1.3ZM840.4 473.3h1.3v1.3h-1.3ZM852.2 483.8h1.3v1.3h-1.3ZM865.6 464.3h1.3v1.3h-1.3ZM864.3 485.8h1.3v1.3h-1.3ZM851.6 497.1h1.3v1.3h-1.3ZM854.7 459.3h1.3v1.3h-1.3ZM824.8 506.4h1.3v1.3h-1.3ZM856.7 478.6h1.3v1.3h-1.3ZM850.4 448.2h1.3v1.3h-1.3ZM856.1 483.2h1.3v1.3h-1.3ZM821.9 470.8h1.3v1.3h-1.3ZM880.7 477.7h1.3v1.3h-1.3ZM847.0 458.0h1.3v1.3h-1.3ZM848.1 488.2h1.3v1.3h-1.3ZM875.6 440.1h1.3v1.3h-1.3ZM866.9 485.9h1.3v1.3h-1.3ZM868.7 490.8h1.3v1.3h-1.3ZM838.3 489.5h1.3v1.3h-1.3ZM870.3 474.7h1.3v1.3h-1.3ZM857.5 470.2h1.3v1.3h-1.3ZM826.7 507.9h1.3v1.3h-1.3ZM838.3 487.9h1.3v1.3h-1.3ZM850.0 468.2h1.3v1.3h-1.3ZM856.2 466.8h1.3v1.3h-1.3ZM847.6 486.3h1.3v1.3h-1.3ZM861.8 476.9h1.3v1.3h-1.3ZM842.6 487.1h1.3v1.3h-1.3ZM855.6 511.7h1.3v1.3h-1.3ZM858.6 454.0h1.3v1.3h-1.3ZM831.7 482.0h1.3v1.3h-1.3ZM852.6 478.1h1.3v1.3h-1.3ZM869.1 443.5h1.3v1.3h-1.3ZM816.1 481.1h1.3v1.3h-1.3ZM862.3 456.6h1.3v1.3h-1.3ZM838.1 508.7h1.3v1.3h-1.3ZM874.2 525.4h1.3v1.3h-1.3ZM864.2 463.5h1.3v1.3h-1.3ZM824.2 472.2h1.3v1.3h-1.3ZM831.0 474.4h1.3v1.3h-1.3ZM830.4 458.9h1.3v1.3h-1.3ZM855.1 501.8h1.3v1.3h-1.3ZM849.2 445.6h1.3v1.3h-1.3ZM846.4 511.0h1.3v1.3h-1.3ZM845.0 460.3h1.3v1.3h-1.3ZM835.9 488.5h1.3v1.3h-1.3ZM832.1 497.1h1.3v1.3h-1.3ZM866.5 461.9h1.3v1.3h-1.3ZM864.5 444.0h1.3v1.3h-1.3ZM837.2 477.4h1.3v1.3h-1.3ZM833.7 475.5h1.3v1.3h-1.3ZM842.4 514.2h1.3v1.3h-1.3ZM869.6 459.3h1.3v1.3h-1.3ZM862.4 458.2h1.3v1.3h-1.3ZM844.2 492.9h1.3v1.3h-1.3ZM833.9 480.9h1.3v1.3h-1.3ZM819.3 501.8h1.3v1.3h-1.3ZM850.6 480.9h1.3v1.3h-1.3ZM860.8 495.4h1.3v1.3h-1.3ZM856.8 479.8h1.3v1.3h-1.3ZM849.8 454.8h1.3v1.3h-1.3ZM841.5 517.8h1.3v1.3h-1.3ZM857.8 498.5h1.3v1.3h-1.3ZM862.7 479.2h1.3v1.3h-1.3ZM832.4 456.3h1.3v1.3h-1.3ZM847.4 464.2h1.3v1.3h-1.3ZM838.2 490.9h1.3v1.3h-1.3ZM864.8 471.2h1.3v1.3h-1.3ZM838.9 454.2h1.3v1.3h-1.3ZM818.3 478.2h1.3v1.3h-1.3ZM854.7 484.8h1.3v1.3h-1.3ZM845.6 494.4h1.3v1.3h-1.3ZM861.8 481.1h1.3v1.3h-1.3ZM833.4 490.0h1.3v1.3h-1.3ZM862.0 502.0h1.3v1.3h-1.3ZM856.4 460.5h1.3v1.3h-1.3ZM852.0 476.7h1.3v1.3h-1.3ZM848.3 475.4h1.3v1.3h-1.3ZM832.6 479.4h1.3v1.3h-1.3ZM861.9 499.4h1.3v1.3h-1.3ZM854.0 471.0h1.3v1.3h-1.3ZM848.0 484.0h1.3v1.3h-1.3ZM844.8 470.6h1.3v1.3h-1.3ZM853.2 477.8h1.3v1.3h-1.3ZM834.4 489.0h1.3v1.3h-1.3ZM829.4 491.9h1.3v1.3h-1.3ZM830.3 452.7h1.3v1.3h-1.3ZM840.2 481.5h1.3v1.3h-1.3ZM845.1 491.2h1.3v1.3h-1.3ZM858.8 460.9h1.3v1.3h-1.3ZM841.2 479.3h1.3v1.3h-1.3ZM857.9 486.8h1.3v1.3h-1.3ZM833.3 481.0h1.3v1.3h-1.3ZM826.8 496.3h1.3v1.3h-1.3ZM849.9 509.6h1.3v1.3h-1.3ZM849.2 472.7h1.3v1.3h-1.3ZM853.5 451.4h1.3v1.3h-1.3ZM863.8 471.0h1.3v1.3h-1.3ZM819.7 498.9h1.3v1.3h-1.3ZM851.5 500.6h1.3v1.3h-1.3ZM845.9 451.4h1.3v1.3h-1.3ZM853.2 459.9h1.3v1.3h-1.3ZM839.8 484.0h1.3v1.3h-1.3ZM826.6 476.4h1.3v1.3h-1.3ZM827.5 491.1h1.3v1.3h-1.3ZM875.7 482.0h1.3v1.3h-1.3ZM867.1 431.1h1.3v1.3h-1.3ZM830.8 507.7h1.3v1.3h-1.3ZM863.2 506.2h1.3v1.3h-1.3ZM845.6 466.5h1.3v1.3h-1.3ZM862.3 466.5h1.3v1.3h-1.3ZM830.2 505.4h1.3v1.3h-1.3ZM847.3 484.2h1.3v1.3h-1.3ZM846.4 476.0h1.3v1.3h-1.3ZM844.1 473.8h1.3v1.3h-1.3ZM858.4 503.1h1.3v1.3h-1.3ZM856.7 476.0h1.3v1.3h-1.3ZM834.5 506.7h1.3v1.3h-1.3ZM841.4 459.3h1.3v1.3h-1.3ZM853.5 459.1h1.3v1.3h-1.3ZM850.8 472.4h1.3v1.3h-1.3ZM863.9 482.3h1.3v1.3h-1.3ZM862.9 494.9h1.3v1.3h-1.3ZM832.6 488.8h1.3v1.3h-1.3ZM843.0 462.3h1.3v1.3h-1.3ZM855.9 491.0h1.3v1.3h-1.3ZM839.3 450.1h1.3v1.3h-1.3ZM873.6 480.7h1.3v1.3h-1.3ZM855.9 458.1h1.3v1.3h-1.3ZM841.0 488.9h1.3v1.3h-1.3ZM836.9 498.6h1.3v1.3h-1.3ZM845.9 482.5h1.3v1.3h-1.3ZM855.9 458.4h1.3v1.3h-1.3ZM848.8 510.5h1.3v1.3h-1.3ZM835.6 496.3h1.3v1.3h-1.3ZM844.2 480.6h1.3v1.3h-1.3ZM838.3 496.1h1.3v1.3h-1.3ZM859.8 439.2h1.3v1.3h-1.3ZM860.2 488.0h1.3v1.3h-1.3ZM863.3 471.0h1.3v1.3h-1.3ZM834.4 455.2h1.3v1.3h-1.3ZM843.5 495.6h1.3v1.3h-1.3ZM867.1 477.9h1.3v1.3h-1.3ZM850.1 470.7h1.3v1.3h-1.3ZM847.0 478.3h1.3v1.3h-1.3ZM858.3 479.1h1.3v1.3h-1.3ZM837.4 481.8h1.3v1.3h-1.3ZM854.2 500.3h1.3v1.3h-1.3ZM870.1 462.9h1.3v1.3h-1.3ZM864.9 469.4h1.3v1.3h-1.3ZM856.2 483.4h1.3v1.3h-1.3ZM838.4 497.2h1.3v1.3h-1.3ZM851.1 496.3h1.3v1.3h-1.3ZM843.2 489.5h1.3v1.3h-1.3ZM867.0 479.9h1.3v1.3h-1.3ZM832.4 489.0h1.3v1.3h-1.3ZM843.4 460.3h1.3v1.3h-1.3ZM846.4 469.3h1.3v1.3h-1.3ZM828.3 472.7h1.3v1.3h-1.3ZM849.2 465.1h1.3v1.3h-1.3ZM864.5 506.0h1.3v1.3h-1.3ZM893.0 485.4h1.3v1.3h-1.3ZM848.5 471.2h1.3v1.3h-1.3ZM867.4 486.2h1.3v1.3h-1.3ZM853.7 482.7h1.3v1.3h-1.3ZM843.2 466.5h1.3v1.3h-1.3ZM844.5 475.2h1.3v1.3h-1.3ZM848.6 505.9h1.3v1.3h-1.3ZM855.1 468.9h1.3v1.3h-1.3ZM819.9 485.6h1.3v1.3h-1.3ZM851.8 471.1h1.3v1.3h-1.3ZM834.9 508.8h1.3v1.3h-1.3ZM836.6 506.2h1.3v1.3h-1.3ZM854.0 479.3h1.3v1.3h-1.3ZM852.6 477.1h1.3v1.3h-1.3ZM835.7 497.8h1.3v1.3h-1.3ZM842.3 487.7h1.3v1.3h-1.3ZM857.9 478.5h1.3v1.3h-1.3ZM834.0 438.8h1.3v1.3h-1.3ZM850.0 472.1h1.3v1.3h-1.3ZM877.4 445.4h1.3v1.3h-1.3ZM840.2 510.6h1.3v1.3h-1.3ZM855.7 494.0h1.3v1.3h-1.3ZM839.5 497.7h1.3v1.3h-1.3ZM846.9 481.8h1.3v1.3h-1.3ZM824.3 480.8h1.3v1.3h-1.3ZM863.6 477.1h1.3v1.3h-1.3ZM837.3 476.1h1.3v1.3h-1.3ZM856.8 479.3h1.3v1.3h-1.3ZM847.4 483.0h1.3v1.3h-1.3ZM848.0 450.0h1.3v1.3h-1.3ZM823.7 480.0h1.3v1.3h-1.3ZM835.3 488.4h1.3v1.3h-1.3ZM833.8 493.1h1.3v1.3h-1.3ZM861.2 447.9h1.3v1.3h-1.3ZM872.1 493.1h1.3v1.3h-1.3ZM829.6 472.3h1.3v1.3h-1.3ZM842.0 468.3h1.3v1.3h-1.3ZM848.5 445.4h1.3v1.3h-1.3ZM826.8 481.9h1.3v1.3h-1.3ZM838.7 473.2h1.3v1.3h-1.3ZM844.4 479.2h1.3v1.3h-1.3ZM854.4 495.4h1.3v1.3h-1.3ZM857.1 464.1h1.3v1.3h-1.3ZM830.1 490.2h1.3v1.3h-1.3ZM877.3 487.4h1.3v1.3h-1.3ZM836.8 483.9h1.3v1.3h-1.3ZM831.5 486.5h1.3v1.3h-1.3ZM839.0 495.8h1.3v1.3h-1.3ZM860.4 455.2h1.3v1.3h-1.3ZM827.3 480.7h1.3v1.3h-1.3ZM850.4 476.2h1.3v1.3h-1.3ZM827.3 495.7h1.3v1.3h-1.3ZM859.7 485.8h1.3v1.3h-1.3ZM856.2 470.2h1.3v1.3h-1.3ZM849.9 487.2h1.3v1.3h-1.3ZM872.6 491.2h1.3v1.3h-1.3ZM835.9 497.7h1.3v1.3h-1.3ZM856.2 456.7h1.3v1.3h-1.3ZM859.9 455.1h1.3v1.3h-1.3ZM846.1 475.6h1.3v1.3h-1.3ZM827.4 499.0h1.3v1.3h-1.3ZM873.7 445.0h1.3v1.3h-1.3ZM864.2 474.3h1.3v1.3h-1.3ZM864.7 475.3h1.3v1.3h-1.3ZM844.4 483.5h1.3v1.3h-1.3ZM853.0 461.2h1.3v1.3h-1.3ZM835.9 501.9h1.3v1.3h-1.3ZM851.4 492.5h1.3v1.3h-1.3ZM831.7 487.1h1.3v1.3h-1.3ZM863.3 493.6h1.3v1.3h-1.3ZM850.4 481.6h1.3v1.3h-1.3ZM852.3 481.3h1.3v1.3h-1.3ZM871.7 471.0h1.3v1.3h-1.3ZM850.7 515.3h1.3v1.3h-1.3ZM845.5 478.4h1.3v1.3h-1.3ZM866.3 437.7h1.3v1.3h-1.3ZM875.1 451.3h1.3v1.3h-1.3ZM846.1 500.3h1.3v1.3h-1.3ZM853.5 466.6h1.3v1.3h-1.3ZM826.7 518.5h1.3v1.3h-1.3ZM835.4 477.7h1.3v1.3h-1.3ZM860.9 447.2h1.3v1.3h-1.3ZM842.6 485.3h1.3v1.3h-1.3ZM834.3 489.6h1.3v1.3h-1.3ZM853.2 480.0h1.3v1.3h-1.3ZM844.0 488.3h1.3v1.3h-1.3ZM843.6 506.7h1.3v1.3h-1.3ZM845.4 494.0h1.3v1.3h-1.3ZM836.1 493.1h1.3v1.3h-1.3ZM837.5 470.2h1.3v1.3h-1.3ZM868.3 437.1h1.3v1.3h-1.3ZM840.4 477.6h1.3v1.3h-1.3ZM876.9 459.4h1.3v1.3h-1.3ZM836.5 467.9h1.3v1.3h-1.3ZM851.7 491.8h1.3v1.3h-1.3ZM832.0 482.9h1.3v1.3h-1.3ZM831.1 496.6h1.3v1.3h-1.3ZM842.0 476.5h1.3v1.3h-1.3ZM879.6 493.8h1.3v1.3h-1.3ZM851.8 444.1h1.3v1.3h-1.3ZM852.7 474.5h1.3v1.3h-1.3ZM859.3 487.6h1.3v1.3h-1.3ZM842.8 484.1h1.3v1.3h-1.3ZM844.9 486.0h1.3v1.3h-1.3ZM867.7 461.7h1.3v1.3h-1.3ZM833.5 501.0h1.3v1.3h-1.3ZM851.5 497.9h1.3v1.3h-1.3ZM860.5 480.6h1.3v1.3h-1.3ZM827.7 471.5h1.3v1.3h-1.3ZM855.1 473.3h1.3v1.3h-1.3ZM838.8 464.7h1.3v1.3h-1.3ZM842.1 475.1h1.3v1.3h-1.3ZM847.4 493.7h1.3v1.3h-1.3ZM842.1 469.4h1.3v1.3h-1.3ZM808.3 497.1h1.3v1.3h-1.3ZM856.7 495.6h1.3v1.3h-1.3ZM824.0 469.6h1.3v1.3h-1.3ZM846.7 497.0h1.3v1.3h-1.3ZM875.1 457.0h1.3v1.3h-1.3ZM854.1 474.7h1.3v1.3h-1.3ZM835.6 496.0h1.3v1.3h-1.3ZM837.9 481.9h1.3v1.3h-1.3ZM845.2 476.9h1.3v1.3h-1.3ZM867.3 481.4h1.3v1.3h-1.3ZM859.5 469.3h1.3v1.3h-1.3ZM830.5 476.5h1.3v1.3h-1.3ZM854.0 484.7h1.3v1.3h-1.3ZM854.6 503.8h1.3v1.3h-1.3ZM850.4 487.6h1.3v1.3h-1.3ZM832.7 479.4h1.3v1.3h-1.3ZM852.8 438.4h1.3v1.3h-1.3ZM850.3 461.3h1.3v1.3h-1.3ZM842.4 471.1h1.3v1.3h-1.3ZM855.7 491.8h1.3v1.3h-1.3ZM855.3 442.1h1.3v1.3h-1.3ZM859.4 484.6h1.3v1.3h-1.3ZM851.7 494.5h1.3v1.3h-1.3ZM849.3 496.6h1.3v1.3h-1.3ZM865.7 478.6h1.3v1.3h-1.3ZM838.9 467.7h1.3v1.3h-1.3ZM842.3 463.0h1.3v1.3h-1.3ZM871.5 474.6h1.3v1.3h-1.3ZM847.7 466.9h1.3v1.3h-1.3ZM860.3 460.2h1.3v1.3h-1.3ZM835.2 499.7h1.3v1.3h-1.3ZM857.0 453.9h1.3v1.3h-1.3ZM846.2 476.2h1.3v1.3h-1.3ZM830.0 506.6h1.3v1.3h-1.3ZM854.1 474.9h1.3v1.3h-1.3ZM824.3 472.2h1.3v1.3h-1.3ZM866.6 462.5h1.3v1.3h-1.3ZM871.4 468.9h1.3v1.3h-1.3ZM838.8 484.6h1.3v1.3h-1.3ZM869.8 483.0h1.3v1.3h-1.3ZM833.0 508.0h1.3v1.3h-1.3ZM849.4 495.2h1.3v1.3h-1.3ZM857.5 453.2h1.3v1.3h-1.3ZM839.6 501.7h1.3v1.3h-1.3ZM829.9 477.1h1.3v1.3h-1.3ZM850.3 462.1h1.3v1.3h-1.3ZM840.1 461.6h1.3v1.3h-1.3ZM842.0 453.8h1.3v1.3h-1.3ZM837.6 452.7h1.3v1.3h-1.3ZM855.9 454.3h1.3v1.3h-1.3ZM834.0 505.7h1.3v1.3h-1.3ZM840.9 469.2h1.3v1.3h-1.3ZM848.0 489.9h1.3v1.3h-1.3ZM814.2 467.5h1.3v1.3h-1.3ZM850.2 489.6h1.3v1.3h-1.3ZM862.4 479.9h1.3v1.3h-1.3ZM871.4 504.8h1.3v1.3h-1.3ZM858.8 467.7h1.3v1.3h-1.3ZM868.1 466.0h1.3v1.3h-1.3ZM843.0 475.1h1.3v1.3h-1.3ZM861.8 464.4h1.3v1.3h-1.3ZM821.8 507.2h1.3v1.3h-1.3ZM853.9 472.5h1.3v1.3h-1.3ZM858.2 478.4h1.3v1.3h-1.3ZM867.4 485.5h1.3v1.3h-1.3ZM839.9 488.2h1.3v1.3h-1.3ZM859.7 478.2h1.3v1.3h-1.3ZM871.5 473.9h1.3v1.3h-1.3ZM857.9 494.1h1.3v1.3h-1.3ZM841.3 466.7h1.3v1.3h-1.3ZM870.7 492.9h1.3v1.3h-1.3ZM850.1 464.1h1.3v1.3h-1.3ZM821.8 517.8h1.3v1.3h-1.3ZM844.2 492.5h1.3v1.3h-1.3ZM875.6 443.8h1.3v1.3h-1.3ZM841.3 469.9h1.3v1.3h-1.3ZM837.3 499.5h1.3v1.3h-1.3ZM878.1 503.2h1.3v1.3h-1.3ZM839.0 483.9h1.3v1.3h-1.3ZM858.9 460.9h1.3v1.3h-1.3ZM853.2 507.8h1.3v1.3h-1.3ZM832.0 478.7h1.3v1.3h-1.3ZM856.9 476.9h1.3v1.3h-1.3ZM853.9 489.4h1.3v1.3h-1.3ZM845.9 461.4h1.3v1.3h-1.3ZM806.5 503.5h1.3v1.3h-1.3ZM861.4 488.4h1.3v1.3h-1.3ZM872.2 469.7h1.3v1.3h-1.3ZM864.0 448.0h1.3v1.3h-1.3ZM840.7 454.0h1.3v1.3h-1.3ZM858.8 470.1h1.3v1.3h-1.3ZM843.4 479.4h1.3v1.3h-1.3ZM841.6 500.0h1.3v1.3h-1.3ZM855.2 456.1h1.3v1.3h-1.3ZM846.0 467.5h1.3v1.3h-1.3ZM840.0 470.5h1.3v1.3h-1.3ZM849.6 472.4h1.3v1.3h-1.3ZM844.9 471.5h1.3v1.3h-1.3ZM836.0 498.7h1.3v1.3h-1.3ZM874.5 470.0h1.3v1.3h-1.3ZM855.1 489.6h1.3v1.3h-1.3ZM859.3 468.9h1.3v1.3h-1.3ZM840.2 508.5h1.3v1.3h-1.3ZM854.1 502.7h1.3v1.3h-1.3ZM862.0 469.5h1.3v1.3h-1.3ZM835.5 527.0h1.3v1.3h-1.3ZM840.6 461.5h1.3v1.3h-1.3ZM857.6 463.6h1.3v1.3h-1.3ZM839.8 479.6h1.3v1.3h-1.3ZM836.1 495.4h1.3v1.3h-1.3ZM875.8 427.7h1.3v1.3h-1.3ZM843.6 473.1h1.3v1.3h-1.3ZM838.0 487.9h1.3v1.3h-1.3ZM851.5 499.7h1.3v1.3h-1.3ZM856.3 489.0h1.3v1.3h-1.3ZM849.9 504.7h1.3v1.3h-1.3ZM856.1 483.8h1.3v1.3h-1.3ZM838.5 477.3h1.3v1.3h-1.3ZM853.9 456.9h1.3v1.3h-1.3ZM838.2 478.1h1.3v1.3h-1.3ZM846.4 474.5h1.3v1.3h-1.3ZM855.0 476.9h1.3v1.3h-1.3ZM828.1 484.8h1.3v1.3h-1.3ZM862.5 477.1h1.3v1.3h-1.3ZM842.0 462.2h1.3v1.3h-1.3ZM858.0 471.5h1.3v1.3h-1.3ZM856.0 477.3h1.3v1.3h-1.3ZM848.8 486.7h1.3v1.3h-1.3ZM850.9 461.4h1.3v1.3h-1.3ZM836.4 504.4h1.3v1.3h-1.3ZM830.4 467.3h1.3v1.3h-1.3ZM850.0 494.7h1.3v1.3h-1.3ZM848.8 483.1h1.3v1.3h-1.3ZM848.8 506.3h1.3v1.3h-1.3ZM860.8 448.7h1.3v1.3h-1.3ZM830.5 486.8h1.3v1.3h-1.3ZM857.2 465.1h1.3v1.3h-1.3ZM855.9 499.9h1.3v1.3h-1.3ZM861.7 469.8h1.3v1.3h-1.3ZM833.8 509.9h1.3v1.3h-1.3ZM840.6 463.0h1.3v1.3h-1.3ZM872.0 471.1h1.3v1.3h-1.3ZM849.4 458.5h1.3v1.3h-1.3ZM853.6 497.0h1.3v1.3h-1.3ZM870.4 469.0h1.3v1.3h-1.3ZM857.5 458.7h1.3v1.3h-1.3ZM825.5 477.7h1.3v1.3h-1.3ZM880.1 477.9h1.3v1.3h-1.3ZM840.1 485.6h1.3v1.3h-1.3ZM858.3 470.7h1.3v1.3h-1.3ZM830.3 500.1h1.3v1.3h-1.3ZM862.3 509.2h1.3v1.3h-1.3ZM852.6 496.7h1.3v1.3h-1.3ZM885.0 456.4h1.3v1.3h-1.3ZM878.2 463.6h1.3v1.3h-1.3ZM835.4 499.6h1.3v1.3h-1.3ZM840.0 491.1h1.3v1.3h-1.3ZM851.6 426.2h1.3v1.3h-1.3ZM840.0 464.1h1.3v1.3h-1.3ZM873.9 463.4h1.3v1.3h-1.3ZM833.7 557.1h1.3v1.3h-1.3ZM846.6 534.1h1.3v1.3h-1.3ZM851.8 478.2h1.3v1.3h-1.3ZM836.6 491.5h1.3v1.3h-1.3ZM858.6 498.8h1.3v1.3h-1.3ZM896.9 489.2h1.3v1.3h-1.3ZM834.7 473.4h1.3v1.3h-1.3ZM827.9 451.8h1.3v1.3h-1.3ZM823.3 522.2h1.3v1.3h-1.3ZM846.3 489.9h1.3v1.3h-1.3ZM852.7 527.0h1.3v1.3h-1.3ZM858.5 518.2h1.3v1.3h-1.3ZM832.7 487.2h1.3v1.3h-1.3ZM827.9 492.1h1.3v1.3h-1.3ZM827.0 483.8h1.3v1.3h-1.3ZM841.2 488.5h1.3v1.3h-1.3ZM839.1 480.2h1.3v1.3h-1.3ZM873.8 484.7h1.3v1.3h-1.3ZM822.8 500.8h1.3v1.3h-1.3ZM821.0 462.8h1.3v1.3h-1.3ZM846.9 445.0h1.3v1.3h-1.3ZM774.2 503.6h1.3v1.3h-1.3ZM867.8 444.9h1.3v1.3h-1.3ZM825.3 512.3h1.3v1.3h-1.3ZM801.3 468.8h1.3v1.3h-1.3ZM818.5 489.1h1.3v1.3h-1.3ZM801.6 521.8h1.3v1.3h-1.3ZM841.8 504.1h1.3v1.3h-1.3ZM837.8 431.4h1.3v1.3h-1.3ZM841.7 454.8h1.3v1.3h-1.3ZM845.2 469.4h1.3v1.3h-1.3ZM838.0 488.7h1.3v1.3h-1.3ZM862.0 518.0h1.3v1.3h-1.3ZM822.9 494.5h1.3v1.3h-1.3ZM877.1 509.8h1.3v1.3h-1.3ZM829.0 491.4h1.3v1.3h-1.3ZM837.4 523.2h1.3v1.3h-1.3ZM845.7 506.3h1.3v1.3h-1.3ZM893.7 453.6h1.3v1.3h-1.3ZM822.7 443.0h1.3v1.3h-1.3ZM810.0 520.7h1.3v1.3h-1.3ZM851.4 543.9h1.3v1.3h-1.3ZM801.6 468.6h1.3v1.3h-1.3ZM876.8 525.9h1.3v1.3h-1.3ZM864.5 521.1h1.3v1.3h-1.3ZM845.7 494.7h1.3v1.3h-1.3ZM845.7 520.3h1.3v1.3h-1.3ZM841.4 504.6h1.3v1.3h-1.3ZM877.0 461.2h1.3v1.3h-1.3ZM828.5 511.9h1.3v1.3h-1.3ZM805 477h1.3v1.3h-1.3ZM809 478h1.3v1.3h-1.3ZM813 477h1.3v1.3h-1.3ZM895 555h1.3v1.3h-1.3ZM901 470h1.3v1.3h-1.3ZM915 540h1.3v1.3h-1.3ZM905 562h1.3v1.3h-1.3ZM868 537h1.3v1.3h-1.3ZM854 555h1.3v1.3h-1.3ZM843 552h1.3v1.3h-1.3ZM875 522h1.3v1.3h-1.3Z" fill="#2eb82e"/>
<circle cx="838" cy="499" r="16" fill="none" stroke="#22d022" stroke-width="1.1"/>
<path d="M834 493 L856 505 M831 499 L852 511 M830 505 L848 515 M833 511 L843 518" stroke="#22c022" stroke-width="1"/>
<path d="M879 441 L838 503" stroke="#d8c070" stroke-width="0.9"/>
<path d="M840 503 L809 554 M836 503 L822 526" stroke="#e81818" stroke-width="1.8"/>
<path d="M809 555 L838 505" stroke="#cc44cc" stroke-width="0.7"/>
<path d="M830 488 L836 477 M849 508 L854 501" stroke="#2030d0" stroke-width="1.6"/>
<path d="M836 500 L841 502 L845 503" stroke="#e030a0" stroke-width="1.4"/>
<path d="M880 440 L883 421.5" stroke="#22c022" stroke-width="1.8"/>
<path d="M881 435.5 L897 435.5 M880 440 L893.5 442.3" stroke="#e02020" stroke-width="1.6"/>
<path d="M876 444 L879 441" stroke="#e030a0" stroke-width="1.8"/>
</svg>
</body></html>
